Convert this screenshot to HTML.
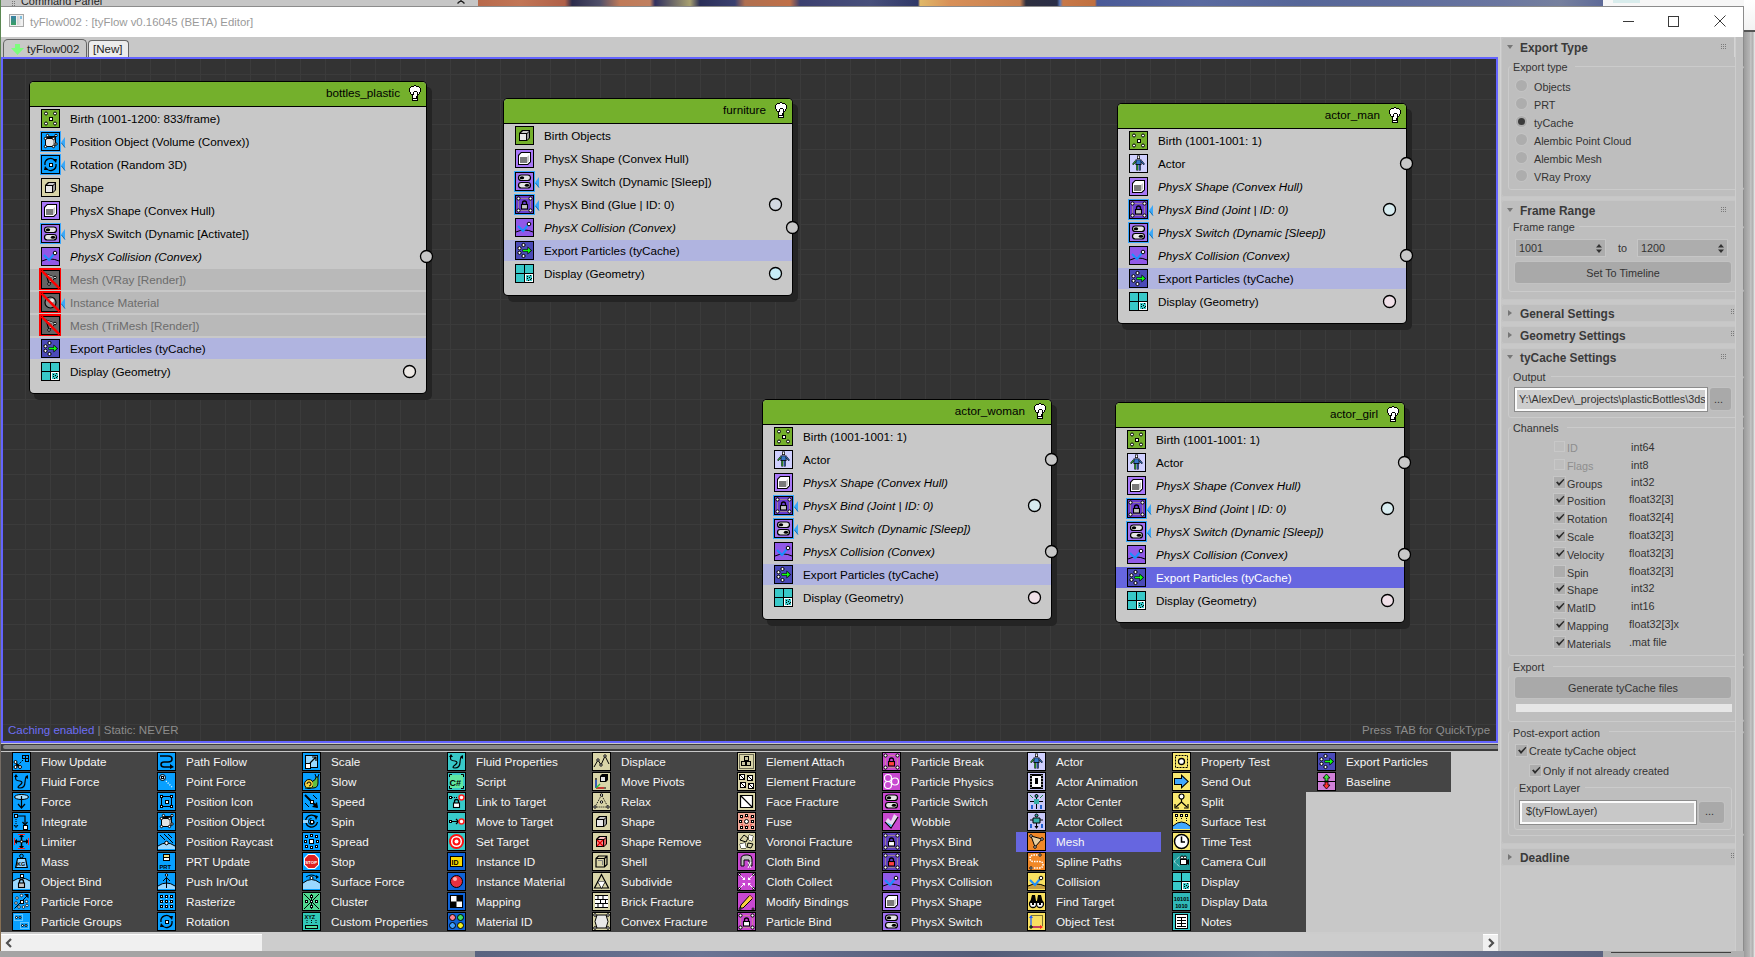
<!DOCTYPE html><html><head><meta charset="utf-8"><style>
*{box-sizing:border-box}
body{margin:0;width:1755px;height:957px;position:relative;overflow:hidden;background:#a8a8a8;font-family:"Liberation Sans", sans-serif;font-size:12px}
.a{position:absolute}
.tx{position:absolute;white-space:nowrap;line-height:20px}
svg text{font-family:"Liberation Sans", sans-serif}

</style></head><body>
<div class="a" style="left:0px;top:0px;width:478px;height:7px;background:#c6c6c6;"></div>
<div class="a" style="left:0px;top:6px;width:478px;height:1px;background:#8e8e8e;"></div>
<svg class="a" style="left:12px;top:0px;" width="3" height="6" viewBox="0 0 3 6"><path d="M0 1h1v1h-1zM2 1h1v1h-1zM0 3h1v1h-1zM2 3h1v1h-1zM0 5h1v1h-1zM2 5h1v1h-1z" fill="#777"/></svg>
<div class="tx" style="left:21px;top:-9px;font-size:10.9px;color:#222;font-weight:normal;font-style:normal;">Command Panel</div>
<svg class="a" style="left:457px;top:0px;" width="8" height="4" viewBox="0 0 8 4"><path d="M0.5 -3 L7.5 3.5 M7.5 -3 L0.5 3.5" stroke="#222" stroke-width="1.4"/></svg>
<div class="a" style="left:478px;top:0px;width:1125px;height:7px;background:linear-gradient(90deg,#b86a4c 0.09%,#c27656 3.73%,#b06048 7.73%,#2c2c4c 8.36%,#50506a 10.84%,#c07a58 12.62%,#c08060 15.29%,#303060 15.73%,#a8a070 18.84%,#2a2e58 19.73%,#3a4070 22.84%,#b07050 23.73%,#c07048 27.73%,#3c4070 28.62%,#48507c 34.84%,#303868 39.11%,#e0b868 39.29%,#d89058 41.96%,#c88050 48.18%,#2e3040 48.71%,#2a2e48 51.47%,#5a78b8 51.73%,#c87848 52.00%,#c07040 54.84%,#4a5a98 55.02%,#5a6aa0 64.18%,#566698 73.07%,#5e6c9c 81.96%,#6a76a0 90.84%,#76809e 96.18%,#5e6a98 100.00%);"></div>
<div class="a" style="left:1603px;top:0px;width:152px;height:7px;background:#f6f6f6;"></div>
<div class="a" style="left:1613px;top:0px;width:27px;height:3px;background:#d8ecec;"></div>
<div class="a" style="left:0px;top:0px;width:1px;height:957px;background:linear-gradient(#5a8a50,#707070 30%,#606878 60%,#8a7050);"></div>
<div class="a" style="left:0px;top:951px;width:475px;height:6px;background:#a4a4a4;"></div>
<div class="a" style="left:475px;top:951px;width:1128px;height:6px;background:linear-gradient(90deg,#5a6480,#6a7494 20%,#545c78 45%,#7a849c 70%,#5c6480 100%);"></div>
<div class="a" style="left:1603px;top:951px;width:152px;height:6px;background:#b0b0b0;"></div>
<div class="a" style="left:1611px;top:952px;width:120px;height:1px;background:#404040;"></div>
<div class="a" style="left:1px;top:6px;width:1743px;height:945px;background:#c8c8c8;"></div>
<div class="a" style="left:1px;top:6px;width:1743px;height:1px;background:#8c8c8c;"></div>
<div class="a" style="left:1743px;top:6px;width:1px;height:945px;background:#8c8c8c;"></div>
<div class="a" style="left:1px;top:7px;width:1742px;height:30px;background:#ffffff;"></div>
<div class="a" style="left:9px;top:14px;width:15px;height:13px;background:#f0f0f0;border:1px solid #a8a8a8"></div>
<div class="a" style="left:11px;top:16px;width:5px;height:9px;background:linear-gradient(#3a80a8,#38a060);"></div>
<div class="a" style="left:17px;top:16px;width:5px;height:9px;background:linear-gradient(90deg,#d0d0d0,#f4f4f4);"></div>
<div class="a" style="left:20px;top:16px;width:2px;height:3px;background:#80c0e0;"></div>
<div class="tx" style="left:30px;top:12px;font-size:11.4px;color:#9a9a9a;font-weight:normal;font-style:normal;">tyFlow002 : [tyFlow v0.16045 (BETA) Editor]</div>
<div class="a" style="left:1623px;top:21px;width:11px;height:1px;background:#3a3a3a;"></div>
<div class="a" style="left:1668px;top:16px;width:11px;height:11px;background:transparent;border:1px solid #3a3a3a"></div>
<svg class="a" style="left:1714px;top:15px;" width="12" height="12" viewBox="0 0 12 12"><path d="M0.5 0.5 L11.5 11.5 M11.5 0.5 L0.5 11.5" stroke="#3a3a3a" stroke-width="1"/></svg>
<div class="a" style="left:1px;top:37px;width:1742px;height:20px;background:#c8c8c8;"></div>
<div class="a" style="left:3px;top:39px;width:84px;height:19px;background:#c8c8c8;border:1px solid #646464;border-bottom:none;border-radius:5px 5px 0 0"></div>
<svg class="a" style="left:11px;top:44px;" width="13" height="11" viewBox="0 0 13 11"><path d="M4 0 H9 V4 H13 L6.5 11 L0 4 H4 Z" fill="#7cfc7c"/></svg>
<div class="tx" style="left:27px;top:39px;font-size:11.5px;color:#1e1e1e;font-weight:normal;font-style:normal;">tyFlow002</div>
<div class="a" style="left:88px;top:40px;width:41px;height:18px;background:#ececec;border:1px solid #646464;border-bottom:none;border-radius:4px 4px 0 0"></div>
<div class="tx" style="left:93px;top:39px;font-size:11.5px;color:#1e1e1e;font-weight:normal;font-style:normal;">[New]</div>
<div class="a" style="left:1px;top:57px;width:1497px;height:686px;background:#333333;background-image:linear-gradient(90deg,#3b3b3b 1px,transparent 1px),linear-gradient(#3b3b3b 1px,transparent 1px);background-size:25px 25px;background-position:24px 17px"></div>
<div class="a" style="left:1px;top:57px;width:1497px;height:686px;background:transparent;border:2px solid #6464ff"></div>
<div class="tx" style="left:8px;top:720px;font-size:11.5px"><span style="color:#6e6ef4">Caching enabled</span><span style="color:#8c8c8c"> | Static: NEVER</span></div>
<div class="tx" style="left:1362px;top:720px;font-size:11.5px;color:#8c8c8c;font-weight:normal;font-style:normal;">Press TAB for QuickType</div>
<div class="a" style="left:34px;top:87px;width:398px;height:313px;background:#242424;border-radius:5px"></div>
<div class="a" style="left:29px;top:81px;width:398px;height:313px;background:#000;border-radius:5px"></div>
<div class="a" style="left:30px;top:82px;width:396px;height:311px;background:#c8c8c8;border-radius:4px;overflow:hidden"><div class="a" style="left:0;top:0;width:396px;height:24px;background:#74b02c"></div><div class="a" style="left:0;top:24px;width:396px;height:1px;background:#000"></div></div>
<div class="tx" style="left:29px;top:83px;width:371px;text-align:right;font-size:11.7px;color:#000">bottles_plastic</div>
<svg class="a" style="left:409px;top:85px;shape-rendering:crispEdges" width="12" height="16" viewBox="0 0 12 16"><path d="M5 0h1v1h-1zM6 0h1v1h-1zM2 1h1v1h-1zM3 1h1v1h-1zM4 1h1v1h-1zM7 1h1v1h-1zM8 1h1v1h-1zM9 1h1v1h-1zM1 2h1v1h-1zM10 2h1v1h-1zM0 3h1v1h-1zM11 3h1v1h-1zM0 4h1v1h-1zM11 4h1v1h-1zM0 5h1v1h-1zM11 5h1v1h-1zM0 6h1v1h-1zM5 6h1v1h-1zM6 6h1v1h-1zM7 6h1v1h-1zM11 6h1v1h-1zM1 7h1v1h-1zM4 7h1v1h-1zM8 7h1v1h-1zM10 7h1v1h-1zM1 8h1v1h-1zM4 8h1v1h-1zM8 8h1v1h-1zM10 8h1v1h-1zM2 9h1v1h-1zM3 9h1v1h-1zM4 9h1v1h-1zM8 9h1v1h-1zM9 9h1v1h-1zM3 10h1v1h-1zM8 10h1v1h-1zM3 11h1v1h-1zM7 11h1v1h-1zM8 11h1v1h-1zM3 12h1v1h-1zM7 12h1v1h-1zM8 12h1v1h-1zM3 13h1v1h-1zM4 13h1v1h-1zM5 13h1v1h-1zM6 13h1v1h-1zM7 13h1v1h-1zM8 13h1v1h-1zM3 14h1v1h-1zM8 14h1v1h-1zM3 15h1v1h-1zM4 15h1v1h-1zM5 15h1v1h-1zM6 15h1v1h-1zM7 15h1v1h-1zM8 15h1v1h-1z" fill="#000"/><path d="M5 1h1v1h-1zM6 1h1v1h-1zM2 2h1v1h-1zM3 2h1v1h-1zM4 2h1v1h-1zM5 2h1v1h-1zM6 2h1v1h-1zM7 2h1v1h-1zM8 2h1v1h-1zM9 2h1v1h-1zM1 3h1v1h-1zM2 3h1v1h-1zM3 3h1v1h-1zM4 3h1v1h-1zM5 3h1v1h-1zM6 3h1v1h-1zM7 3h1v1h-1zM8 3h1v1h-1zM9 3h1v1h-1zM10 3h1v1h-1zM1 4h1v1h-1zM2 4h1v1h-1zM3 4h1v1h-1zM4 4h1v1h-1zM5 4h1v1h-1zM6 4h1v1h-1zM7 4h1v1h-1zM8 4h1v1h-1zM9 4h1v1h-1zM10 4h1v1h-1zM1 5h1v1h-1zM2 5h1v1h-1zM3 5h1v1h-1zM4 5h1v1h-1zM5 5h1v1h-1zM6 5h1v1h-1zM7 5h1v1h-1zM8 5h1v1h-1zM9 5h1v1h-1zM10 5h1v1h-1zM1 6h1v1h-1zM2 6h1v1h-1zM3 6h1v1h-1zM4 6h1v1h-1zM8 6h1v1h-1zM9 6h1v1h-1zM10 6h1v1h-1zM2 7h1v1h-1zM3 7h1v1h-1zM5 7h1v1h-1zM6 7h1v1h-1zM7 7h1v1h-1zM9 7h1v1h-1zM2 8h1v1h-1zM3 8h1v1h-1zM5 8h1v1h-1zM6 8h1v1h-1zM7 8h1v1h-1zM9 8h1v1h-1zM5 9h1v1h-1zM6 9h1v1h-1zM7 9h1v1h-1zM4 10h1v1h-1zM5 10h1v1h-1zM6 10h1v1h-1zM7 10h1v1h-1zM4 11h1v1h-1zM5 11h1v1h-1zM6 11h1v1h-1zM4 12h1v1h-1zM5 12h1v1h-1zM6 12h1v1h-1zM4 14h1v1h-1zM5 14h1v1h-1zM6 14h1v1h-1zM7 14h1v1h-1z" fill="#fff"/></svg>
<svg class="a" style="left:41px;top:109px;" width="19" height="19" viewBox="0 0 19 19"><rect x="0" y="0" width="19" height="19" fill="#000"/><rect x="1" y="1" width="17" height="17" fill="#74b02c"/><circle cx="5" cy="4.5" r="1.5" fill="#fff" stroke="#000" stroke-width="1"/><circle cx="14" cy="4.5" r="1.5" fill="#fff" stroke="#000" stroke-width="1"/><rect x="8.5" y="8.5" width="3" height="3" fill="#fff" stroke="#000" stroke-width="1"/><circle cx="5" cy="14.5" r="1.5" fill="#fff" stroke="#000" stroke-width="1"/><circle cx="14" cy="14.5" r="1.5" fill="#fff" stroke="#000" stroke-width="1"/></svg>
<div class="tx" style="left:70px;top:109px;font-size:11.7px;color:#000000;font-weight:normal;font-style:normal;">Birth (1001-1200: 833/frame)</div>
<div class="a" style="left:40px;top:131px;width:21px;height:21px;background:#3aa8ff;"></div>
<svg class="a" style="left:41px;top:132px;" width="19" height="19" viewBox="0 0 19 19"><rect x="0" y="0" width="19" height="19" fill="#000"/><rect x="1" y="1" width="17" height="17" fill="#08a0ff"/><path d="M4 6 L6 4 H15 V13 L13 15 H4 Z" fill="#000" /><path d="M5 7 H12 V14 H5 Z" fill="#e4e4e4" /><path d="M12 7 L14 5 V13 L12 14 Z" fill="#a0a0a0" /><circle cx="4.5" cy="6.5" r="1.2" fill="#fff" stroke="#000" stroke-width="1"/><circle cx="12.5" cy="6.5" r="1.2" fill="#fff" stroke="#000" stroke-width="1"/><circle cx="4.5" cy="14.5" r="1.2" fill="#fff" stroke="#000" stroke-width="1"/><circle cx="12.5" cy="14.5" r="1.2" fill="#fff" stroke="#000" stroke-width="1"/><circle cx="6.5" cy="3.5" r="1.2" fill="#fff" stroke="#000" stroke-width="1"/><circle cx="15" cy="3.5" r="1.2" fill="#fff" stroke="#000" stroke-width="1"/><circle cx="15" cy="12" r="1.2" fill="#fff" stroke="#000" stroke-width="1"/></svg>
<svg class="a" style="left:61px;top:137px;" width="5" height="12" viewBox="0 0 5 12"><path d="M0 5.5 L4 0 L4 11 Z" fill="#3aa8f8"/><path d="M0.5 6 L4 10.5" stroke="#1a70b0" stroke-width="1"/></svg>
<div class="tx" style="left:70px;top:132px;font-size:11.7px;color:#000000;font-weight:normal;font-style:normal;">Position Object (Volume (Convex))</div>
<div class="a" style="left:40px;top:154px;width:21px;height:21px;background:#3aa8ff;"></div>
<svg class="a" style="left:41px;top:155px;" width="19" height="19" viewBox="0 0 19 19"><rect x="0" y="0" width="19" height="19" fill="#000"/><rect x="1" y="1" width="17" height="17" fill="#08a0ff"/><path d="M4 10 A5.5 5.5 0 0 1 14 6" fill="none" stroke="#000" stroke-width="1.3" /><path d="M12 4 L16 4 L15 8 Z" fill="#000" /><path d="M15 9 A5.5 5.5 0 0 1 5 13" fill="none" stroke="#000" stroke-width="1.3" /><path d="M7 15 L3 15 L4 11 Z" fill="#000" /><rect x="8.5" y="8.5" width="3" height="3" fill="#fff" stroke="#000" stroke-width="1"/></svg>
<svg class="a" style="left:61px;top:160px;" width="5" height="12" viewBox="0 0 5 12"><path d="M0 5.5 L4 0 L4 11 Z" fill="#3aa8f8"/><path d="M0.5 6 L4 10.5" stroke="#1a70b0" stroke-width="1"/></svg>
<div class="tx" style="left:70px;top:155px;font-size:11.7px;color:#000000;font-weight:normal;font-style:normal;">Rotation (Random 3D)</div>
<svg class="a" style="left:41px;top:178px;" width="19" height="19" viewBox="0 0 19 19"><rect x="0" y="0" width="19" height="19" fill="#000"/><rect x="1" y="1" width="17" height="17" fill="#d8d4a8"/><path d="M4 7 L7 4 L15 4 L15 12 L12 15 L4 15 Z" fill="#000" /><path d="M5 8 H11 V14 H5 Z" fill="#e8e8e8" /><path d="M6 7 L8 5 H14 L12 7 Z" fill="#c8c8c8" /><path d="M12 8 L14 6 V12 L12 14 Z" fill="#9a9a9a" /></svg>
<div class="tx" style="left:70px;top:178px;font-size:11.7px;color:#000000;font-weight:normal;font-style:normal;">Shape</div>
<svg class="a" style="left:41px;top:201px;" width="19" height="19" viewBox="0 0 19 19"><rect x="0" y="0" width="19" height="19" fill="#000"/><rect x="1" y="1" width="17" height="17" fill="#a878f8"/><path d="M3 6 L6 3 H16 V13 L13 16 H3 Z" fill="#000" /><path d="M4 6.5 L6.5 4 H15 V12.5 L12.5 15 H4 Z" fill="#fff" /><path d="M5 8 H12 V14 H5 Z" fill="#7a7a7a" /><path d="M12 8 L14 6 V12 L12 14 Z" fill="#c8c8c8" /></svg>
<div class="tx" style="left:70px;top:201px;font-size:11.7px;color:#000000;font-weight:normal;font-style:normal;">PhysX Shape (Convex Hull)</div>
<div class="a" style="left:40px;top:223px;width:21px;height:21px;background:#3aa8ff;"></div>
<svg class="a" style="left:41px;top:224px;" width="19" height="19" viewBox="0 0 19 19"><rect x="0" y="0" width="19" height="19" fill="#000"/><rect x="1" y="1" width="17" height="17" fill="#a070f0"/><rect x="3.5" y="3" width="12" height="5.5" rx="2.75" fill="#e4e4e4" stroke="#000" stroke-width="1.2"/><rect x="3.5" y="10.5" width="12" height="5.5" rx="2.75" fill="#e4e4e4" stroke="#000" stroke-width="1.2"/><ellipse cx="7" cy="5.75" rx="2.2" ry="1.6" fill="#000"/><ellipse cx="12" cy="13.25" rx="2.2" ry="1.6" fill="#000"/></svg>
<svg class="a" style="left:61px;top:229px;" width="5" height="12" viewBox="0 0 5 12"><path d="M0 5.5 L4 0 L4 11 Z" fill="#3aa8f8"/><path d="M0.5 6 L4 10.5" stroke="#1a70b0" stroke-width="1"/></svg>
<div class="tx" style="left:70px;top:224px;font-size:11.7px;color:#000000;font-weight:normal;font-style:normal;">PhysX Switch (Dynamic [Activate])</div>
<svg class="a" style="left:41px;top:247px;" width="19" height="19" viewBox="0 0 19 19"><rect x="0" y="0" width="19" height="19" fill="#000"/><rect x="1" y="1" width="17" height="17" fill="#9058e8"/><path d="M1 17 V14 Q9.5 10 18 14 V17 Z" fill="#9058e8" /><path d="M1 14 Q9.5 10 18 14" fill="none" stroke="#000" stroke-width="1" /><path d="M3 8 L8 13 L13 7" fill="none" stroke="#1a90ff" stroke-width="2" /><circle cx="14" cy="6" r="1.8" fill="#fff" stroke="#000" stroke-width="1"/></svg>
<div class="tx" style="left:70px;top:247px;font-size:11.7px;color:#000000;font-weight:normal;font-style:italic;">PhysX Collision (Convex)</div>
<svg class="a" style="left:419px;top:249px;" width="15" height="15" viewBox="0 0 15 15"><circle cx="7.5" cy="7.5" r="6" fill="#c8c8c8" stroke="#000" stroke-width="1.3"/></svg>
<div class="a" style="left:30px;top:269px;width:396px;height:21px;background:#b9b9b9;"></div>
<div class="a" style="left:39px;top:268px;width:22px;height:22px;background:#ff0000;"></div>
<svg class="a" style="left:41px;top:270px;" width="19" height="19" viewBox="0 0 19 19"><rect x="0" y="0" width="19" height="19" fill="#000"/><rect x="1" y="1" width="17" height="17" fill="#646464"/><path d="M5 4 L14 7.5 L8 14 Z" fill="none" stroke="#000" stroke-width="1.1" /><path d="M6 5 L13 7.5 L8.5 12.5" fill="none" stroke="#fff" stroke-width="0.7" /><circle cx="14" cy="7.5" r="1.3" fill="#fff" stroke="#000" stroke-width="1"/><circle cx="8" cy="14" r="1.3" fill="#fff" stroke="#000" stroke-width="1"/><path d="M0.5 0.5 L18.5 18.5" stroke="#ff0000" stroke-width="2.4"/></svg>
<div class="tx" style="left:70px;top:270px;font-size:11.7px;color:#6c6c6c;font-weight:normal;font-style:normal;">Mesh (VRay [Render])</div>
<div class="a" style="left:30px;top:292px;width:396px;height:21px;background:#b9b9b9;"></div>
<div class="a" style="left:39px;top:291px;width:22px;height:22px;background:#ff0000;"></div>
<svg class="a" style="left:41px;top:293px;" width="19" height="19" viewBox="0 0 19 19"><rect x="0" y="0" width="19" height="19" fill="#000"/><rect x="1" y="1" width="17" height="17" fill="#646464"/><circle cx="9.5" cy="9.5" r="5.5" fill="#8c8c8c" stroke="#000" stroke-width="1.2"/><circle cx="11" cy="7.5" r="2" fill="#e8e8e8"/><path d="M0.5 0.5 L18.5 18.5" stroke="#ff0000" stroke-width="2.4"/></svg>
<svg class="a" style="left:61px;top:298px;" width="5" height="12" viewBox="0 0 5 12"><path d="M0 5.5 L4 0 L4 11 Z" fill="#3aa8f8"/><path d="M0.5 6 L4 10.5" stroke="#1a70b0" stroke-width="1"/></svg>
<div class="tx" style="left:70px;top:293px;font-size:11.7px;color:#6c6c6c;font-weight:normal;font-style:normal;">Instance Material</div>
<div class="a" style="left:30px;top:315px;width:396px;height:21px;background:#b9b9b9;"></div>
<div class="a" style="left:39px;top:314px;width:22px;height:22px;background:#ff0000;"></div>
<svg class="a" style="left:41px;top:316px;" width="19" height="19" viewBox="0 0 19 19"><rect x="0" y="0" width="19" height="19" fill="#000"/><rect x="1" y="1" width="17" height="17" fill="#646464"/><path d="M5 4 L14 7.5 L8 14 Z" fill="none" stroke="#000" stroke-width="1.1" /><path d="M6 5 L13 7.5 L8.5 12.5" fill="none" stroke="#fff" stroke-width="0.7" /><circle cx="14" cy="7.5" r="1.3" fill="#fff" stroke="#000" stroke-width="1"/><circle cx="8" cy="14" r="1.3" fill="#fff" stroke="#000" stroke-width="1"/><path d="M0.5 0.5 L18.5 18.5" stroke="#ff0000" stroke-width="2.4"/></svg>
<div class="tx" style="left:70px;top:316px;font-size:11.7px;color:#6c6c6c;font-weight:normal;font-style:normal;">Mesh (TriMesh [Render])</div>
<div class="a" style="left:30px;top:338px;width:396px;height:21px;background:#b0b4e0;"></div>
<svg class="a" style="left:41px;top:339px;" width="19" height="19" viewBox="0 0 19 19"><rect x="0" y="0" width="19" height="19" fill="#000"/><rect x="1" y="1" width="17" height="17" fill="#4a4ab8"/><circle cx="8.5" cy="4" r="1.6" fill="#fff" stroke="#000" stroke-width="1"/><circle cx="4.5" cy="7.2" r="1.6" fill="#fff" stroke="#000" stroke-width="1"/><circle cx="4.5" cy="11.8" r="1.6" fill="#fff" stroke="#000" stroke-width="1"/><circle cx="8.5" cy="15" r="1.6" fill="#fff" stroke="#000" stroke-width="1"/><path d="M7.5 8.3 H12.5 V5.5 L17 9.5 L12.5 13.5 V10.7 H7.5 Z" fill="#000" /><path d="M8 8.8 H13 V6.8 L16 9.5 L13 12.2 V10.2 H8 Z" fill="#10ff10" /></svg>
<div class="tx" style="left:70px;top:339px;font-size:11.7px;color:#000000;font-weight:normal;font-style:normal;">Export Particles (tyCache)</div>
<svg class="a" style="left:41px;top:362px;" width="19" height="19" viewBox="0 0 19 19"><rect x="0" y="0" width="19" height="19" fill="#000"/><rect x="1" y="1" width="8" height="8" fill="#38c8c8"/><rect x="10" y="1" width="8" height="8" fill="#38c8c8"/><rect x="1" y="10" width="8" height="8" fill="#38c8c8"/><rect x="10" y="10" width="8" height="8" fill="#ffffff"/><rect x="11" y="11" width="6" height="6" fill="#38c8c8"/><path d="M12 12h1v1h-1zM15 11h1v1h-1zM14 13h1v1h-1zM16 14h1v1h-1zM12 14h1v1h-1zM13 16h1v1h-1zM15 15h1v1h-1z" fill="#000" /></svg>
<div class="tx" style="left:70px;top:362px;font-size:11.7px;color:#000000;font-weight:normal;font-style:normal;">Display (Geometry)</div>
<svg class="a" style="left:402px;top:364px;" width="15" height="15" viewBox="0 0 15 15"><circle cx="7.5" cy="7.5" r="6" fill="#ece8e4" stroke="#000" stroke-width="1.3"/></svg>
<div class="a" style="left:508px;top:104px;width:290px;height:198px;background:#242424;border-radius:5px"></div>
<div class="a" style="left:503px;top:98px;width:290px;height:198px;background:#000;border-radius:5px"></div>
<div class="a" style="left:504px;top:99px;width:288px;height:196px;background:#c8c8c8;border-radius:4px;overflow:hidden"><div class="a" style="left:0;top:0;width:288px;height:24px;background:#74b02c"></div><div class="a" style="left:0;top:24px;width:288px;height:1px;background:#000"></div></div>
<div class="tx" style="left:503px;top:100px;width:263px;text-align:right;font-size:11.7px;color:#000">furniture</div>
<svg class="a" style="left:775px;top:102px;shape-rendering:crispEdges" width="12" height="16" viewBox="0 0 12 16"><path d="M5 0h1v1h-1zM6 0h1v1h-1zM2 1h1v1h-1zM3 1h1v1h-1zM4 1h1v1h-1zM7 1h1v1h-1zM8 1h1v1h-1zM9 1h1v1h-1zM1 2h1v1h-1zM10 2h1v1h-1zM0 3h1v1h-1zM11 3h1v1h-1zM0 4h1v1h-1zM11 4h1v1h-1zM0 5h1v1h-1zM11 5h1v1h-1zM0 6h1v1h-1zM5 6h1v1h-1zM6 6h1v1h-1zM7 6h1v1h-1zM11 6h1v1h-1zM1 7h1v1h-1zM4 7h1v1h-1zM8 7h1v1h-1zM10 7h1v1h-1zM1 8h1v1h-1zM4 8h1v1h-1zM8 8h1v1h-1zM10 8h1v1h-1zM2 9h1v1h-1zM3 9h1v1h-1zM4 9h1v1h-1zM8 9h1v1h-1zM9 9h1v1h-1zM3 10h1v1h-1zM8 10h1v1h-1zM3 11h1v1h-1zM7 11h1v1h-1zM8 11h1v1h-1zM3 12h1v1h-1zM7 12h1v1h-1zM8 12h1v1h-1zM3 13h1v1h-1zM4 13h1v1h-1zM5 13h1v1h-1zM6 13h1v1h-1zM7 13h1v1h-1zM8 13h1v1h-1zM3 14h1v1h-1zM8 14h1v1h-1zM3 15h1v1h-1zM4 15h1v1h-1zM5 15h1v1h-1zM6 15h1v1h-1zM7 15h1v1h-1zM8 15h1v1h-1z" fill="#000"/><path d="M5 1h1v1h-1zM6 1h1v1h-1zM2 2h1v1h-1zM3 2h1v1h-1zM4 2h1v1h-1zM5 2h1v1h-1zM6 2h1v1h-1zM7 2h1v1h-1zM8 2h1v1h-1zM9 2h1v1h-1zM1 3h1v1h-1zM2 3h1v1h-1zM3 3h1v1h-1zM4 3h1v1h-1zM5 3h1v1h-1zM6 3h1v1h-1zM7 3h1v1h-1zM8 3h1v1h-1zM9 3h1v1h-1zM10 3h1v1h-1zM1 4h1v1h-1zM2 4h1v1h-1zM3 4h1v1h-1zM4 4h1v1h-1zM5 4h1v1h-1zM6 4h1v1h-1zM7 4h1v1h-1zM8 4h1v1h-1zM9 4h1v1h-1zM10 4h1v1h-1zM1 5h1v1h-1zM2 5h1v1h-1zM3 5h1v1h-1zM4 5h1v1h-1zM5 5h1v1h-1zM6 5h1v1h-1zM7 5h1v1h-1zM8 5h1v1h-1zM9 5h1v1h-1zM10 5h1v1h-1zM1 6h1v1h-1zM2 6h1v1h-1zM3 6h1v1h-1zM4 6h1v1h-1zM8 6h1v1h-1zM9 6h1v1h-1zM10 6h1v1h-1zM2 7h1v1h-1zM3 7h1v1h-1zM5 7h1v1h-1zM6 7h1v1h-1zM7 7h1v1h-1zM9 7h1v1h-1zM2 8h1v1h-1zM3 8h1v1h-1zM5 8h1v1h-1zM6 8h1v1h-1zM7 8h1v1h-1zM9 8h1v1h-1zM5 9h1v1h-1zM6 9h1v1h-1zM7 9h1v1h-1zM4 10h1v1h-1zM5 10h1v1h-1zM6 10h1v1h-1zM7 10h1v1h-1zM4 11h1v1h-1zM5 11h1v1h-1zM6 11h1v1h-1zM4 12h1v1h-1zM5 12h1v1h-1zM6 12h1v1h-1zM4 14h1v1h-1zM5 14h1v1h-1zM6 14h1v1h-1zM7 14h1v1h-1z" fill="#fff"/></svg>
<svg class="a" style="left:515px;top:126px;" width="19" height="19" viewBox="0 0 19 19"><rect x="0" y="0" width="19" height="19" fill="#000"/><rect x="1" y="1" width="17" height="17" fill="#74b02c"/><path d="M4 7 L7 4 L15 4 L15 12 L12 15 L4 15 Z" fill="#000" /><path d="M5 8 H11 V14 H5 Z" fill="#e8e8e8" /><path d="M6 7 L8 5 H14 L12 7 Z" fill="#c8c8c8" /><path d="M12 8 L14 6 V12 L12 14 Z" fill="#9a9a9a" /></svg>
<div class="tx" style="left:544px;top:126px;font-size:11.7px;color:#000000;font-weight:normal;font-style:normal;">Birth Objects</div>
<svg class="a" style="left:515px;top:149px;" width="19" height="19" viewBox="0 0 19 19"><rect x="0" y="0" width="19" height="19" fill="#000"/><rect x="1" y="1" width="17" height="17" fill="#a878f8"/><path d="M3 6 L6 3 H16 V13 L13 16 H3 Z" fill="#000" /><path d="M4 6.5 L6.5 4 H15 V12.5 L12.5 15 H4 Z" fill="#fff" /><path d="M5 8 H12 V14 H5 Z" fill="#7a7a7a" /><path d="M12 8 L14 6 V12 L12 14 Z" fill="#c8c8c8" /></svg>
<div class="tx" style="left:544px;top:149px;font-size:11.7px;color:#000000;font-weight:normal;font-style:normal;">PhysX Shape (Convex Hull)</div>
<div class="a" style="left:514px;top:171px;width:21px;height:21px;background:#3aa8ff;"></div>
<svg class="a" style="left:515px;top:172px;" width="19" height="19" viewBox="0 0 19 19"><rect x="0" y="0" width="19" height="19" fill="#000"/><rect x="1" y="1" width="17" height="17" fill="#a070f0"/><rect x="3.5" y="3" width="12" height="5.5" rx="2.75" fill="#e4e4e4" stroke="#000" stroke-width="1.2"/><rect x="3.5" y="10.5" width="12" height="5.5" rx="2.75" fill="#e4e4e4" stroke="#000" stroke-width="1.2"/><ellipse cx="7" cy="5.75" rx="2.2" ry="1.6" fill="#000"/><ellipse cx="12" cy="13.25" rx="2.2" ry="1.6" fill="#000"/></svg>
<svg class="a" style="left:535px;top:177px;" width="5" height="12" viewBox="0 0 5 12"><path d="M0 5.5 L4 0 L4 11 Z" fill="#3aa8f8"/><path d="M0.5 6 L4 10.5" stroke="#1a70b0" stroke-width="1"/></svg>
<div class="tx" style="left:544px;top:172px;font-size:11.7px;color:#000000;font-weight:normal;font-style:normal;">PhysX Switch (Dynamic [Sleep])</div>
<div class="a" style="left:514px;top:194px;width:21px;height:21px;background:#3aa8ff;"></div>
<svg class="a" style="left:515px;top:195px;" width="19" height="19" viewBox="0 0 19 19"><rect x="0" y="0" width="19" height="19" fill="#000"/><rect x="1" y="1" width="17" height="17" fill="#6a3ed0"/><path d="M3.5 3.5 H15.5 V15.5 H3.5 Z" fill="none" stroke="#c8b868" stroke-width="1" stroke-dasharray="1 1"/><circle cx="3.5" cy="3.5" r="1.6" fill="#fff" stroke="#000" stroke-width="1"/><circle cx="15.5" cy="3.5" r="1.6" fill="#fff" stroke="#000" stroke-width="1"/><circle cx="3.5" cy="15.5" r="1.6" fill="#fff" stroke="#000" stroke-width="1"/><circle cx="15.5" cy="15.5" r="1.6" fill="#fff" stroke="#000" stroke-width="1"/><path d="M7.5 9.5 V8.0 A2 2 0 0 1 11.5 8.0 V9.5" fill="none" stroke="#000" stroke-width="1.3"/><rect x="6.5" y="9.5" width="6" height="4.5" fill="#c4c4c4" stroke="#000" stroke-width="1.1"/></svg>
<svg class="a" style="left:535px;top:200px;" width="5" height="12" viewBox="0 0 5 12"><path d="M0 5.5 L4 0 L4 11 Z" fill="#3aa8f8"/><path d="M0.5 6 L4 10.5" stroke="#1a70b0" stroke-width="1"/></svg>
<div class="tx" style="left:544px;top:195px;font-size:11.7px;color:#000000;font-weight:normal;font-style:normal;">PhysX Bind (Glue | ID: 0)</div>
<svg class="a" style="left:768px;top:197px;" width="15" height="15" viewBox="0 0 15 15"><circle cx="7.5" cy="7.5" r="6" fill="#d2d8e2" stroke="#000" stroke-width="1.3"/></svg>
<svg class="a" style="left:515px;top:218px;" width="19" height="19" viewBox="0 0 19 19"><rect x="0" y="0" width="19" height="19" fill="#000"/><rect x="1" y="1" width="17" height="17" fill="#9058e8"/><path d="M1 17 V14 Q9.5 10 18 14 V17 Z" fill="#9058e8" /><path d="M1 14 Q9.5 10 18 14" fill="none" stroke="#000" stroke-width="1" /><path d="M3 8 L8 13 L13 7" fill="none" stroke="#1a90ff" stroke-width="2" /><circle cx="14" cy="6" r="1.8" fill="#fff" stroke="#000" stroke-width="1"/></svg>
<div class="tx" style="left:544px;top:218px;font-size:11.7px;color:#000000;font-weight:normal;font-style:italic;">PhysX Collision (Convex)</div>
<svg class="a" style="left:785px;top:220px;" width="15" height="15" viewBox="0 0 15 15"><circle cx="7.5" cy="7.5" r="6" fill="#c8c8c8" stroke="#000" stroke-width="1.3"/></svg>
<div class="a" style="left:504px;top:240px;width:288px;height:21px;background:#b0b4e0;"></div>
<svg class="a" style="left:515px;top:241px;" width="19" height="19" viewBox="0 0 19 19"><rect x="0" y="0" width="19" height="19" fill="#000"/><rect x="1" y="1" width="17" height="17" fill="#4a4ab8"/><circle cx="8.5" cy="4" r="1.6" fill="#fff" stroke="#000" stroke-width="1"/><circle cx="4.5" cy="7.2" r="1.6" fill="#fff" stroke="#000" stroke-width="1"/><circle cx="4.5" cy="11.8" r="1.6" fill="#fff" stroke="#000" stroke-width="1"/><circle cx="8.5" cy="15" r="1.6" fill="#fff" stroke="#000" stroke-width="1"/><path d="M7.5 8.3 H12.5 V5.5 L17 9.5 L12.5 13.5 V10.7 H7.5 Z" fill="#000" /><path d="M8 8.8 H13 V6.8 L16 9.5 L13 12.2 V10.2 H8 Z" fill="#10ff10" /></svg>
<div class="tx" style="left:544px;top:241px;font-size:11.7px;color:#000000;font-weight:normal;font-style:normal;">Export Particles (tyCache)</div>
<svg class="a" style="left:515px;top:264px;" width="19" height="19" viewBox="0 0 19 19"><rect x="0" y="0" width="19" height="19" fill="#000"/><rect x="1" y="1" width="8" height="8" fill="#38c8c8"/><rect x="10" y="1" width="8" height="8" fill="#38c8c8"/><rect x="1" y="10" width="8" height="8" fill="#38c8c8"/><rect x="10" y="10" width="8" height="8" fill="#ffffff"/><rect x="11" y="11" width="6" height="6" fill="#38c8c8"/><path d="M12 12h1v1h-1zM15 11h1v1h-1zM14 13h1v1h-1zM16 14h1v1h-1zM12 14h1v1h-1zM13 16h1v1h-1zM15 15h1v1h-1z" fill="#000" /></svg>
<div class="tx" style="left:544px;top:264px;font-size:11.7px;color:#000000;font-weight:normal;font-style:normal;">Display (Geometry)</div>
<svg class="a" style="left:768px;top:266px;" width="15" height="15" viewBox="0 0 15 15"><circle cx="7.5" cy="7.5" r="6" fill="#c8eef8" stroke="#000" stroke-width="1.3"/></svg>
<div class="a" style="left:1122px;top:109px;width:290px;height:221px;background:#242424;border-radius:5px"></div>
<div class="a" style="left:1117px;top:103px;width:290px;height:221px;background:#000;border-radius:5px"></div>
<div class="a" style="left:1118px;top:104px;width:288px;height:219px;background:#c8c8c8;border-radius:4px;overflow:hidden"><div class="a" style="left:0;top:0;width:288px;height:24px;background:#74b02c"></div><div class="a" style="left:0;top:24px;width:288px;height:1px;background:#000"></div></div>
<div class="tx" style="left:1117px;top:105px;width:263px;text-align:right;font-size:11.7px;color:#000">actor_man</div>
<svg class="a" style="left:1389px;top:107px;shape-rendering:crispEdges" width="12" height="16" viewBox="0 0 12 16"><path d="M5 0h1v1h-1zM6 0h1v1h-1zM2 1h1v1h-1zM3 1h1v1h-1zM4 1h1v1h-1zM7 1h1v1h-1zM8 1h1v1h-1zM9 1h1v1h-1zM1 2h1v1h-1zM10 2h1v1h-1zM0 3h1v1h-1zM11 3h1v1h-1zM0 4h1v1h-1zM11 4h1v1h-1zM0 5h1v1h-1zM11 5h1v1h-1zM0 6h1v1h-1zM5 6h1v1h-1zM6 6h1v1h-1zM7 6h1v1h-1zM11 6h1v1h-1zM1 7h1v1h-1zM4 7h1v1h-1zM8 7h1v1h-1zM10 7h1v1h-1zM1 8h1v1h-1zM4 8h1v1h-1zM8 8h1v1h-1zM10 8h1v1h-1zM2 9h1v1h-1zM3 9h1v1h-1zM4 9h1v1h-1zM8 9h1v1h-1zM9 9h1v1h-1zM3 10h1v1h-1zM8 10h1v1h-1zM3 11h1v1h-1zM7 11h1v1h-1zM8 11h1v1h-1zM3 12h1v1h-1zM7 12h1v1h-1zM8 12h1v1h-1zM3 13h1v1h-1zM4 13h1v1h-1zM5 13h1v1h-1zM6 13h1v1h-1zM7 13h1v1h-1zM8 13h1v1h-1zM3 14h1v1h-1zM8 14h1v1h-1zM3 15h1v1h-1zM4 15h1v1h-1zM5 15h1v1h-1zM6 15h1v1h-1zM7 15h1v1h-1zM8 15h1v1h-1z" fill="#000"/><path d="M5 1h1v1h-1zM6 1h1v1h-1zM2 2h1v1h-1zM3 2h1v1h-1zM4 2h1v1h-1zM5 2h1v1h-1zM6 2h1v1h-1zM7 2h1v1h-1zM8 2h1v1h-1zM9 2h1v1h-1zM1 3h1v1h-1zM2 3h1v1h-1zM3 3h1v1h-1zM4 3h1v1h-1zM5 3h1v1h-1zM6 3h1v1h-1zM7 3h1v1h-1zM8 3h1v1h-1zM9 3h1v1h-1zM10 3h1v1h-1zM1 4h1v1h-1zM2 4h1v1h-1zM3 4h1v1h-1zM4 4h1v1h-1zM5 4h1v1h-1zM6 4h1v1h-1zM7 4h1v1h-1zM8 4h1v1h-1zM9 4h1v1h-1zM10 4h1v1h-1zM1 5h1v1h-1zM2 5h1v1h-1zM3 5h1v1h-1zM4 5h1v1h-1zM5 5h1v1h-1zM6 5h1v1h-1zM7 5h1v1h-1zM8 5h1v1h-1zM9 5h1v1h-1zM10 5h1v1h-1zM1 6h1v1h-1zM2 6h1v1h-1zM3 6h1v1h-1zM4 6h1v1h-1zM8 6h1v1h-1zM9 6h1v1h-1zM10 6h1v1h-1zM2 7h1v1h-1zM3 7h1v1h-1zM5 7h1v1h-1zM6 7h1v1h-1zM7 7h1v1h-1zM9 7h1v1h-1zM2 8h1v1h-1zM3 8h1v1h-1zM5 8h1v1h-1zM6 8h1v1h-1zM7 8h1v1h-1zM9 8h1v1h-1zM5 9h1v1h-1zM6 9h1v1h-1zM7 9h1v1h-1zM4 10h1v1h-1zM5 10h1v1h-1zM6 10h1v1h-1zM7 10h1v1h-1zM4 11h1v1h-1zM5 11h1v1h-1zM6 11h1v1h-1zM4 12h1v1h-1zM5 12h1v1h-1zM6 12h1v1h-1zM4 14h1v1h-1zM5 14h1v1h-1zM6 14h1v1h-1zM7 14h1v1h-1z" fill="#fff"/></svg>
<svg class="a" style="left:1129px;top:131px;" width="19" height="19" viewBox="0 0 19 19"><rect x="0" y="0" width="19" height="19" fill="#000"/><rect x="1" y="1" width="17" height="17" fill="#74b02c"/><circle cx="5" cy="4.5" r="1.5" fill="#fff" stroke="#000" stroke-width="1"/><circle cx="14" cy="4.5" r="1.5" fill="#fff" stroke="#000" stroke-width="1"/><rect x="8.5" y="8.5" width="3" height="3" fill="#fff" stroke="#000" stroke-width="1"/><circle cx="5" cy="14.5" r="1.5" fill="#fff" stroke="#000" stroke-width="1"/><circle cx="14" cy="14.5" r="1.5" fill="#fff" stroke="#000" stroke-width="1"/></svg>
<div class="tx" style="left:1158px;top:131px;font-size:11.7px;color:#000000;font-weight:normal;font-style:normal;">Birth (1001-1001: 1)</div>
<svg class="a" style="left:1129px;top:154px;" width="19" height="19" viewBox="0 0 19 19"><rect x="0" y="0" width="19" height="19" fill="#000"/><rect x="1" y="1" width="17" height="17" fill="#d0d0ff"/><path d="M8 1.5 H11 V5 H8 Z" fill="#000" /><path d="M8.7 2.2 H10.3 V4.3 H8.7 Z" fill="#fff" /><path d="M6.5 5.5 H12.5 V11 H6.5 Z" fill="#000" /><path d="M7.3 6.2 H11.7 V10.3 H7.3 Z" fill="#3878c8" /><path d="M6.8 7 L3.8 10.5" fill="none" stroke="#000" stroke-width="1.8" /><path d="M6.8 7 L3.8 10.5" fill="none" stroke="#30d030" stroke-width="0.8" /><path d="M12.2 7 L15.2 10.5" fill="none" stroke="#000" stroke-width="1.8" /><path d="M12.2 7 L15.2 10.5" fill="none" stroke="#3080e0" stroke-width="0.8" /><path d="M7.3 10.5 H9.2 V16.5 H7.3 Z" fill="#000" /><path d="M9.8 10.5 H11.7 V16.5 H9.8 Z" fill="#000" /><path d="M7.8 11 H8.7 V16 H7.8 Z" fill="#30c030" /><path d="M10.3 11 H11.2 V16 H10.3 Z" fill="#3070e0" /></svg>
<div class="tx" style="left:1158px;top:154px;font-size:11.7px;color:#000000;font-weight:normal;font-style:normal;">Actor</div>
<svg class="a" style="left:1399px;top:156px;" width="15" height="15" viewBox="0 0 15 15"><circle cx="7.5" cy="7.5" r="6" fill="#c8c8c8" stroke="#000" stroke-width="1.3"/></svg>
<svg class="a" style="left:1129px;top:177px;" width="19" height="19" viewBox="0 0 19 19"><rect x="0" y="0" width="19" height="19" fill="#000"/><rect x="1" y="1" width="17" height="17" fill="#a878f8"/><path d="M3 6 L6 3 H16 V13 L13 16 H3 Z" fill="#000" /><path d="M4 6.5 L6.5 4 H15 V12.5 L12.5 15 H4 Z" fill="#fff" /><path d="M5 8 H12 V14 H5 Z" fill="#7a7a7a" /><path d="M12 8 L14 6 V12 L12 14 Z" fill="#c8c8c8" /></svg>
<div class="tx" style="left:1158px;top:177px;font-size:11.7px;color:#000000;font-weight:normal;font-style:italic;">PhysX Shape (Convex Hull)</div>
<div class="a" style="left:1128px;top:199px;width:21px;height:21px;background:#3aa8ff;"></div>
<svg class="a" style="left:1129px;top:200px;" width="19" height="19" viewBox="0 0 19 19"><rect x="0" y="0" width="19" height="19" fill="#000"/><rect x="1" y="1" width="17" height="17" fill="#6a3ed0"/><path d="M3.5 3.5 H15.5 V15.5 H3.5 Z" fill="none" stroke="#c8b868" stroke-width="1" stroke-dasharray="1 1"/><circle cx="3.5" cy="3.5" r="1.6" fill="#fff" stroke="#000" stroke-width="1"/><circle cx="15.5" cy="3.5" r="1.6" fill="#fff" stroke="#000" stroke-width="1"/><circle cx="3.5" cy="15.5" r="1.6" fill="#fff" stroke="#000" stroke-width="1"/><circle cx="15.5" cy="15.5" r="1.6" fill="#fff" stroke="#000" stroke-width="1"/><path d="M7.5 9.5 V8.0 A2 2 0 0 1 11.5 8.0 V9.5" fill="none" stroke="#000" stroke-width="1.3"/><rect x="6.5" y="9.5" width="6" height="4.5" fill="#c4c4c4" stroke="#000" stroke-width="1.1"/></svg>
<svg class="a" style="left:1149px;top:205px;" width="5" height="12" viewBox="0 0 5 12"><path d="M0 5.5 L4 0 L4 11 Z" fill="#3aa8f8"/><path d="M0.5 6 L4 10.5" stroke="#1a70b0" stroke-width="1"/></svg>
<div class="tx" style="left:1158px;top:200px;font-size:11.7px;color:#000000;font-weight:normal;font-style:italic;">PhysX Bind (Joint | ID: 0)</div>
<svg class="a" style="left:1382px;top:202px;" width="15" height="15" viewBox="0 0 15 15"><circle cx="7.5" cy="7.5" r="6" fill="#d8ecf0" stroke="#000" stroke-width="1.3"/></svg>
<div class="a" style="left:1128px;top:222px;width:21px;height:21px;background:#3aa8ff;"></div>
<svg class="a" style="left:1129px;top:223px;" width="19" height="19" viewBox="0 0 19 19"><rect x="0" y="0" width="19" height="19" fill="#000"/><rect x="1" y="1" width="17" height="17" fill="#a070f0"/><rect x="3.5" y="3" width="12" height="5.5" rx="2.75" fill="#e4e4e4" stroke="#000" stroke-width="1.2"/><rect x="3.5" y="10.5" width="12" height="5.5" rx="2.75" fill="#e4e4e4" stroke="#000" stroke-width="1.2"/><ellipse cx="7" cy="5.75" rx="2.2" ry="1.6" fill="#000"/><ellipse cx="12" cy="13.25" rx="2.2" ry="1.6" fill="#000"/></svg>
<svg class="a" style="left:1149px;top:228px;" width="5" height="12" viewBox="0 0 5 12"><path d="M0 5.5 L4 0 L4 11 Z" fill="#3aa8f8"/><path d="M0.5 6 L4 10.5" stroke="#1a70b0" stroke-width="1"/></svg>
<div class="tx" style="left:1158px;top:223px;font-size:11.7px;color:#000000;font-weight:normal;font-style:italic;">PhysX Switch (Dynamic [Sleep])</div>
<svg class="a" style="left:1129px;top:246px;" width="19" height="19" viewBox="0 0 19 19"><rect x="0" y="0" width="19" height="19" fill="#000"/><rect x="1" y="1" width="17" height="17" fill="#9058e8"/><path d="M1 17 V14 Q9.5 10 18 14 V17 Z" fill="#9058e8" /><path d="M1 14 Q9.5 10 18 14" fill="none" stroke="#000" stroke-width="1" /><path d="M3 8 L8 13 L13 7" fill="none" stroke="#1a90ff" stroke-width="2" /><circle cx="14" cy="6" r="1.8" fill="#fff" stroke="#000" stroke-width="1"/></svg>
<div class="tx" style="left:1158px;top:246px;font-size:11.7px;color:#000000;font-weight:normal;font-style:italic;">PhysX Collision (Convex)</div>
<svg class="a" style="left:1399px;top:248px;" width="15" height="15" viewBox="0 0 15 15"><circle cx="7.5" cy="7.5" r="6" fill="#c8c8c8" stroke="#000" stroke-width="1.3"/></svg>
<div class="a" style="left:1118px;top:268px;width:288px;height:21px;background:#b0b4e0;"></div>
<svg class="a" style="left:1129px;top:269px;" width="19" height="19" viewBox="0 0 19 19"><rect x="0" y="0" width="19" height="19" fill="#000"/><rect x="1" y="1" width="17" height="17" fill="#4a4ab8"/><circle cx="8.5" cy="4" r="1.6" fill="#fff" stroke="#000" stroke-width="1"/><circle cx="4.5" cy="7.2" r="1.6" fill="#fff" stroke="#000" stroke-width="1"/><circle cx="4.5" cy="11.8" r="1.6" fill="#fff" stroke="#000" stroke-width="1"/><circle cx="8.5" cy="15" r="1.6" fill="#fff" stroke="#000" stroke-width="1"/><path d="M7.5 8.3 H12.5 V5.5 L17 9.5 L12.5 13.5 V10.7 H7.5 Z" fill="#000" /><path d="M8 8.8 H13 V6.8 L16 9.5 L13 12.2 V10.2 H8 Z" fill="#10ff10" /></svg>
<div class="tx" style="left:1158px;top:269px;font-size:11.7px;color:#000000;font-weight:normal;font-style:normal;">Export Particles (tyCache)</div>
<svg class="a" style="left:1129px;top:292px;" width="19" height="19" viewBox="0 0 19 19"><rect x="0" y="0" width="19" height="19" fill="#000"/><rect x="1" y="1" width="8" height="8" fill="#38c8c8"/><rect x="10" y="1" width="8" height="8" fill="#38c8c8"/><rect x="1" y="10" width="8" height="8" fill="#38c8c8"/><rect x="10" y="10" width="8" height="8" fill="#ffffff"/><rect x="11" y="11" width="6" height="6" fill="#38c8c8"/><path d="M12 12h1v1h-1zM15 11h1v1h-1zM14 13h1v1h-1zM16 14h1v1h-1zM12 14h1v1h-1zM13 16h1v1h-1zM15 15h1v1h-1z" fill="#000" /></svg>
<div class="tx" style="left:1158px;top:292px;font-size:11.7px;color:#000000;font-weight:normal;font-style:normal;">Display (Geometry)</div>
<svg class="a" style="left:1382px;top:294px;" width="15" height="15" viewBox="0 0 15 15"><circle cx="7.5" cy="7.5" r="6" fill="#f0e0e8" stroke="#000" stroke-width="1.3"/></svg>
<div class="a" style="left:767px;top:405px;width:290px;height:221px;background:#242424;border-radius:5px"></div>
<div class="a" style="left:762px;top:399px;width:290px;height:221px;background:#000;border-radius:5px"></div>
<div class="a" style="left:763px;top:400px;width:288px;height:219px;background:#c8c8c8;border-radius:4px;overflow:hidden"><div class="a" style="left:0;top:0;width:288px;height:24px;background:#74b02c"></div><div class="a" style="left:0;top:24px;width:288px;height:1px;background:#000"></div></div>
<div class="tx" style="left:762px;top:401px;width:263px;text-align:right;font-size:11.7px;color:#000">actor_woman</div>
<svg class="a" style="left:1034px;top:403px;shape-rendering:crispEdges" width="12" height="16" viewBox="0 0 12 16"><path d="M5 0h1v1h-1zM6 0h1v1h-1zM2 1h1v1h-1zM3 1h1v1h-1zM4 1h1v1h-1zM7 1h1v1h-1zM8 1h1v1h-1zM9 1h1v1h-1zM1 2h1v1h-1zM10 2h1v1h-1zM0 3h1v1h-1zM11 3h1v1h-1zM0 4h1v1h-1zM11 4h1v1h-1zM0 5h1v1h-1zM11 5h1v1h-1zM0 6h1v1h-1zM5 6h1v1h-1zM6 6h1v1h-1zM7 6h1v1h-1zM11 6h1v1h-1zM1 7h1v1h-1zM4 7h1v1h-1zM8 7h1v1h-1zM10 7h1v1h-1zM1 8h1v1h-1zM4 8h1v1h-1zM8 8h1v1h-1zM10 8h1v1h-1zM2 9h1v1h-1zM3 9h1v1h-1zM4 9h1v1h-1zM8 9h1v1h-1zM9 9h1v1h-1zM3 10h1v1h-1zM8 10h1v1h-1zM3 11h1v1h-1zM7 11h1v1h-1zM8 11h1v1h-1zM3 12h1v1h-1zM7 12h1v1h-1zM8 12h1v1h-1zM3 13h1v1h-1zM4 13h1v1h-1zM5 13h1v1h-1zM6 13h1v1h-1zM7 13h1v1h-1zM8 13h1v1h-1zM3 14h1v1h-1zM8 14h1v1h-1zM3 15h1v1h-1zM4 15h1v1h-1zM5 15h1v1h-1zM6 15h1v1h-1zM7 15h1v1h-1zM8 15h1v1h-1z" fill="#000"/><path d="M5 1h1v1h-1zM6 1h1v1h-1zM2 2h1v1h-1zM3 2h1v1h-1zM4 2h1v1h-1zM5 2h1v1h-1zM6 2h1v1h-1zM7 2h1v1h-1zM8 2h1v1h-1zM9 2h1v1h-1zM1 3h1v1h-1zM2 3h1v1h-1zM3 3h1v1h-1zM4 3h1v1h-1zM5 3h1v1h-1zM6 3h1v1h-1zM7 3h1v1h-1zM8 3h1v1h-1zM9 3h1v1h-1zM10 3h1v1h-1zM1 4h1v1h-1zM2 4h1v1h-1zM3 4h1v1h-1zM4 4h1v1h-1zM5 4h1v1h-1zM6 4h1v1h-1zM7 4h1v1h-1zM8 4h1v1h-1zM9 4h1v1h-1zM10 4h1v1h-1zM1 5h1v1h-1zM2 5h1v1h-1zM3 5h1v1h-1zM4 5h1v1h-1zM5 5h1v1h-1zM6 5h1v1h-1zM7 5h1v1h-1zM8 5h1v1h-1zM9 5h1v1h-1zM10 5h1v1h-1zM1 6h1v1h-1zM2 6h1v1h-1zM3 6h1v1h-1zM4 6h1v1h-1zM8 6h1v1h-1zM9 6h1v1h-1zM10 6h1v1h-1zM2 7h1v1h-1zM3 7h1v1h-1zM5 7h1v1h-1zM6 7h1v1h-1zM7 7h1v1h-1zM9 7h1v1h-1zM2 8h1v1h-1zM3 8h1v1h-1zM5 8h1v1h-1zM6 8h1v1h-1zM7 8h1v1h-1zM9 8h1v1h-1zM5 9h1v1h-1zM6 9h1v1h-1zM7 9h1v1h-1zM4 10h1v1h-1zM5 10h1v1h-1zM6 10h1v1h-1zM7 10h1v1h-1zM4 11h1v1h-1zM5 11h1v1h-1zM6 11h1v1h-1zM4 12h1v1h-1zM5 12h1v1h-1zM6 12h1v1h-1zM4 14h1v1h-1zM5 14h1v1h-1zM6 14h1v1h-1zM7 14h1v1h-1z" fill="#fff"/></svg>
<svg class="a" style="left:774px;top:427px;" width="19" height="19" viewBox="0 0 19 19"><rect x="0" y="0" width="19" height="19" fill="#000"/><rect x="1" y="1" width="17" height="17" fill="#74b02c"/><circle cx="5" cy="4.5" r="1.5" fill="#fff" stroke="#000" stroke-width="1"/><circle cx="14" cy="4.5" r="1.5" fill="#fff" stroke="#000" stroke-width="1"/><rect x="8.5" y="8.5" width="3" height="3" fill="#fff" stroke="#000" stroke-width="1"/><circle cx="5" cy="14.5" r="1.5" fill="#fff" stroke="#000" stroke-width="1"/><circle cx="14" cy="14.5" r="1.5" fill="#fff" stroke="#000" stroke-width="1"/></svg>
<div class="tx" style="left:803px;top:427px;font-size:11.7px;color:#000000;font-weight:normal;font-style:normal;">Birth (1001-1001: 1)</div>
<svg class="a" style="left:774px;top:450px;" width="19" height="19" viewBox="0 0 19 19"><rect x="0" y="0" width="19" height="19" fill="#000"/><rect x="1" y="1" width="17" height="17" fill="#d0d0ff"/><path d="M8 1.5 H11 V5 H8 Z" fill="#000" /><path d="M8.7 2.2 H10.3 V4.3 H8.7 Z" fill="#fff" /><path d="M6.5 5.5 H12.5 V11 H6.5 Z" fill="#000" /><path d="M7.3 6.2 H11.7 V10.3 H7.3 Z" fill="#3878c8" /><path d="M6.8 7 L3.8 10.5" fill="none" stroke="#000" stroke-width="1.8" /><path d="M6.8 7 L3.8 10.5" fill="none" stroke="#30d030" stroke-width="0.8" /><path d="M12.2 7 L15.2 10.5" fill="none" stroke="#000" stroke-width="1.8" /><path d="M12.2 7 L15.2 10.5" fill="none" stroke="#3080e0" stroke-width="0.8" /><path d="M7.3 10.5 H9.2 V16.5 H7.3 Z" fill="#000" /><path d="M9.8 10.5 H11.7 V16.5 H9.8 Z" fill="#000" /><path d="M7.8 11 H8.7 V16 H7.8 Z" fill="#30c030" /><path d="M10.3 11 H11.2 V16 H10.3 Z" fill="#3070e0" /></svg>
<div class="tx" style="left:803px;top:450px;font-size:11.7px;color:#000000;font-weight:normal;font-style:normal;">Actor</div>
<svg class="a" style="left:1044px;top:452px;" width="15" height="15" viewBox="0 0 15 15"><circle cx="7.5" cy="7.5" r="6" fill="#c8c8c8" stroke="#000" stroke-width="1.3"/></svg>
<svg class="a" style="left:774px;top:473px;" width="19" height="19" viewBox="0 0 19 19"><rect x="0" y="0" width="19" height="19" fill="#000"/><rect x="1" y="1" width="17" height="17" fill="#a878f8"/><path d="M3 6 L6 3 H16 V13 L13 16 H3 Z" fill="#000" /><path d="M4 6.5 L6.5 4 H15 V12.5 L12.5 15 H4 Z" fill="#fff" /><path d="M5 8 H12 V14 H5 Z" fill="#7a7a7a" /><path d="M12 8 L14 6 V12 L12 14 Z" fill="#c8c8c8" /></svg>
<div class="tx" style="left:803px;top:473px;font-size:11.7px;color:#000000;font-weight:normal;font-style:italic;">PhysX Shape (Convex Hull)</div>
<div class="a" style="left:773px;top:495px;width:21px;height:21px;background:#3aa8ff;"></div>
<svg class="a" style="left:774px;top:496px;" width="19" height="19" viewBox="0 0 19 19"><rect x="0" y="0" width="19" height="19" fill="#000"/><rect x="1" y="1" width="17" height="17" fill="#6a3ed0"/><path d="M3.5 3.5 H15.5 V15.5 H3.5 Z" fill="none" stroke="#c8b868" stroke-width="1" stroke-dasharray="1 1"/><circle cx="3.5" cy="3.5" r="1.6" fill="#fff" stroke="#000" stroke-width="1"/><circle cx="15.5" cy="3.5" r="1.6" fill="#fff" stroke="#000" stroke-width="1"/><circle cx="3.5" cy="15.5" r="1.6" fill="#fff" stroke="#000" stroke-width="1"/><circle cx="15.5" cy="15.5" r="1.6" fill="#fff" stroke="#000" stroke-width="1"/><path d="M7.5 9.5 V8.0 A2 2 0 0 1 11.5 8.0 V9.5" fill="none" stroke="#000" stroke-width="1.3"/><rect x="6.5" y="9.5" width="6" height="4.5" fill="#c4c4c4" stroke="#000" stroke-width="1.1"/></svg>
<svg class="a" style="left:794px;top:501px;" width="5" height="12" viewBox="0 0 5 12"><path d="M0 5.5 L4 0 L4 11 Z" fill="#3aa8f8"/><path d="M0.5 6 L4 10.5" stroke="#1a70b0" stroke-width="1"/></svg>
<div class="tx" style="left:803px;top:496px;font-size:11.7px;color:#000000;font-weight:normal;font-style:italic;">PhysX Bind (Joint | ID: 0)</div>
<svg class="a" style="left:1027px;top:498px;" width="15" height="15" viewBox="0 0 15 15"><circle cx="7.5" cy="7.5" r="6" fill="#d8ecf0" stroke="#000" stroke-width="1.3"/></svg>
<div class="a" style="left:773px;top:518px;width:21px;height:21px;background:#3aa8ff;"></div>
<svg class="a" style="left:774px;top:519px;" width="19" height="19" viewBox="0 0 19 19"><rect x="0" y="0" width="19" height="19" fill="#000"/><rect x="1" y="1" width="17" height="17" fill="#a070f0"/><rect x="3.5" y="3" width="12" height="5.5" rx="2.75" fill="#e4e4e4" stroke="#000" stroke-width="1.2"/><rect x="3.5" y="10.5" width="12" height="5.5" rx="2.75" fill="#e4e4e4" stroke="#000" stroke-width="1.2"/><ellipse cx="7" cy="5.75" rx="2.2" ry="1.6" fill="#000"/><ellipse cx="12" cy="13.25" rx="2.2" ry="1.6" fill="#000"/></svg>
<svg class="a" style="left:794px;top:524px;" width="5" height="12" viewBox="0 0 5 12"><path d="M0 5.5 L4 0 L4 11 Z" fill="#3aa8f8"/><path d="M0.5 6 L4 10.5" stroke="#1a70b0" stroke-width="1"/></svg>
<div class="tx" style="left:803px;top:519px;font-size:11.7px;color:#000000;font-weight:normal;font-style:italic;">PhysX Switch (Dynamic [Sleep])</div>
<svg class="a" style="left:774px;top:542px;" width="19" height="19" viewBox="0 0 19 19"><rect x="0" y="0" width="19" height="19" fill="#000"/><rect x="1" y="1" width="17" height="17" fill="#9058e8"/><path d="M1 17 V14 Q9.5 10 18 14 V17 Z" fill="#9058e8" /><path d="M1 14 Q9.5 10 18 14" fill="none" stroke="#000" stroke-width="1" /><path d="M3 8 L8 13 L13 7" fill="none" stroke="#1a90ff" stroke-width="2" /><circle cx="14" cy="6" r="1.8" fill="#fff" stroke="#000" stroke-width="1"/></svg>
<div class="tx" style="left:803px;top:542px;font-size:11.7px;color:#000000;font-weight:normal;font-style:italic;">PhysX Collision (Convex)</div>
<svg class="a" style="left:1044px;top:544px;" width="15" height="15" viewBox="0 0 15 15"><circle cx="7.5" cy="7.5" r="6" fill="#c8c8c8" stroke="#000" stroke-width="1.3"/></svg>
<div class="a" style="left:763px;top:564px;width:288px;height:21px;background:#b0b4e0;"></div>
<svg class="a" style="left:774px;top:565px;" width="19" height="19" viewBox="0 0 19 19"><rect x="0" y="0" width="19" height="19" fill="#000"/><rect x="1" y="1" width="17" height="17" fill="#4a4ab8"/><circle cx="8.5" cy="4" r="1.6" fill="#fff" stroke="#000" stroke-width="1"/><circle cx="4.5" cy="7.2" r="1.6" fill="#fff" stroke="#000" stroke-width="1"/><circle cx="4.5" cy="11.8" r="1.6" fill="#fff" stroke="#000" stroke-width="1"/><circle cx="8.5" cy="15" r="1.6" fill="#fff" stroke="#000" stroke-width="1"/><path d="M7.5 8.3 H12.5 V5.5 L17 9.5 L12.5 13.5 V10.7 H7.5 Z" fill="#000" /><path d="M8 8.8 H13 V6.8 L16 9.5 L13 12.2 V10.2 H8 Z" fill="#10ff10" /></svg>
<div class="tx" style="left:803px;top:565px;font-size:11.7px;color:#000000;font-weight:normal;font-style:normal;">Export Particles (tyCache)</div>
<svg class="a" style="left:774px;top:588px;" width="19" height="19" viewBox="0 0 19 19"><rect x="0" y="0" width="19" height="19" fill="#000"/><rect x="1" y="1" width="8" height="8" fill="#38c8c8"/><rect x="10" y="1" width="8" height="8" fill="#38c8c8"/><rect x="1" y="10" width="8" height="8" fill="#38c8c8"/><rect x="10" y="10" width="8" height="8" fill="#ffffff"/><rect x="11" y="11" width="6" height="6" fill="#38c8c8"/><path d="M12 12h1v1h-1zM15 11h1v1h-1zM14 13h1v1h-1zM16 14h1v1h-1zM12 14h1v1h-1zM13 16h1v1h-1zM15 15h1v1h-1z" fill="#000" /></svg>
<div class="tx" style="left:803px;top:588px;font-size:11.7px;color:#000000;font-weight:normal;font-style:normal;">Display (Geometry)</div>
<svg class="a" style="left:1027px;top:590px;" width="15" height="15" viewBox="0 0 15 15"><circle cx="7.5" cy="7.5" r="6" fill="#f0e0e8" stroke="#000" stroke-width="1.3"/></svg>
<div class="a" style="left:1120px;top:408px;width:290px;height:221px;background:#242424;border-radius:5px"></div>
<div class="a" style="left:1115px;top:402px;width:290px;height:221px;background:#000;border-radius:5px"></div>
<div class="a" style="left:1116px;top:403px;width:288px;height:219px;background:#c8c8c8;border-radius:4px;overflow:hidden"><div class="a" style="left:0;top:0;width:288px;height:24px;background:#74b02c"></div><div class="a" style="left:0;top:24px;width:288px;height:1px;background:#000"></div></div>
<div class="tx" style="left:1115px;top:404px;width:263px;text-align:right;font-size:11.7px;color:#000">actor_girl</div>
<svg class="a" style="left:1387px;top:406px;shape-rendering:crispEdges" width="12" height="16" viewBox="0 0 12 16"><path d="M5 0h1v1h-1zM6 0h1v1h-1zM2 1h1v1h-1zM3 1h1v1h-1zM4 1h1v1h-1zM7 1h1v1h-1zM8 1h1v1h-1zM9 1h1v1h-1zM1 2h1v1h-1zM10 2h1v1h-1zM0 3h1v1h-1zM11 3h1v1h-1zM0 4h1v1h-1zM11 4h1v1h-1zM0 5h1v1h-1zM11 5h1v1h-1zM0 6h1v1h-1zM5 6h1v1h-1zM6 6h1v1h-1zM7 6h1v1h-1zM11 6h1v1h-1zM1 7h1v1h-1zM4 7h1v1h-1zM8 7h1v1h-1zM10 7h1v1h-1zM1 8h1v1h-1zM4 8h1v1h-1zM8 8h1v1h-1zM10 8h1v1h-1zM2 9h1v1h-1zM3 9h1v1h-1zM4 9h1v1h-1zM8 9h1v1h-1zM9 9h1v1h-1zM3 10h1v1h-1zM8 10h1v1h-1zM3 11h1v1h-1zM7 11h1v1h-1zM8 11h1v1h-1zM3 12h1v1h-1zM7 12h1v1h-1zM8 12h1v1h-1zM3 13h1v1h-1zM4 13h1v1h-1zM5 13h1v1h-1zM6 13h1v1h-1zM7 13h1v1h-1zM8 13h1v1h-1zM3 14h1v1h-1zM8 14h1v1h-1zM3 15h1v1h-1zM4 15h1v1h-1zM5 15h1v1h-1zM6 15h1v1h-1zM7 15h1v1h-1zM8 15h1v1h-1z" fill="#000"/><path d="M5 1h1v1h-1zM6 1h1v1h-1zM2 2h1v1h-1zM3 2h1v1h-1zM4 2h1v1h-1zM5 2h1v1h-1zM6 2h1v1h-1zM7 2h1v1h-1zM8 2h1v1h-1zM9 2h1v1h-1zM1 3h1v1h-1zM2 3h1v1h-1zM3 3h1v1h-1zM4 3h1v1h-1zM5 3h1v1h-1zM6 3h1v1h-1zM7 3h1v1h-1zM8 3h1v1h-1zM9 3h1v1h-1zM10 3h1v1h-1zM1 4h1v1h-1zM2 4h1v1h-1zM3 4h1v1h-1zM4 4h1v1h-1zM5 4h1v1h-1zM6 4h1v1h-1zM7 4h1v1h-1zM8 4h1v1h-1zM9 4h1v1h-1zM10 4h1v1h-1zM1 5h1v1h-1zM2 5h1v1h-1zM3 5h1v1h-1zM4 5h1v1h-1zM5 5h1v1h-1zM6 5h1v1h-1zM7 5h1v1h-1zM8 5h1v1h-1zM9 5h1v1h-1zM10 5h1v1h-1zM1 6h1v1h-1zM2 6h1v1h-1zM3 6h1v1h-1zM4 6h1v1h-1zM8 6h1v1h-1zM9 6h1v1h-1zM10 6h1v1h-1zM2 7h1v1h-1zM3 7h1v1h-1zM5 7h1v1h-1zM6 7h1v1h-1zM7 7h1v1h-1zM9 7h1v1h-1zM2 8h1v1h-1zM3 8h1v1h-1zM5 8h1v1h-1zM6 8h1v1h-1zM7 8h1v1h-1zM9 8h1v1h-1zM5 9h1v1h-1zM6 9h1v1h-1zM7 9h1v1h-1zM4 10h1v1h-1zM5 10h1v1h-1zM6 10h1v1h-1zM7 10h1v1h-1zM4 11h1v1h-1zM5 11h1v1h-1zM6 11h1v1h-1zM4 12h1v1h-1zM5 12h1v1h-1zM6 12h1v1h-1zM4 14h1v1h-1zM5 14h1v1h-1zM6 14h1v1h-1zM7 14h1v1h-1z" fill="#fff"/></svg>
<svg class="a" style="left:1127px;top:430px;" width="19" height="19" viewBox="0 0 19 19"><rect x="0" y="0" width="19" height="19" fill="#000"/><rect x="1" y="1" width="17" height="17" fill="#74b02c"/><circle cx="5" cy="4.5" r="1.5" fill="#fff" stroke="#000" stroke-width="1"/><circle cx="14" cy="4.5" r="1.5" fill="#fff" stroke="#000" stroke-width="1"/><rect x="8.5" y="8.5" width="3" height="3" fill="#fff" stroke="#000" stroke-width="1"/><circle cx="5" cy="14.5" r="1.5" fill="#fff" stroke="#000" stroke-width="1"/><circle cx="14" cy="14.5" r="1.5" fill="#fff" stroke="#000" stroke-width="1"/></svg>
<div class="tx" style="left:1156px;top:430px;font-size:11.7px;color:#000000;font-weight:normal;font-style:normal;">Birth (1001-1001: 1)</div>
<svg class="a" style="left:1127px;top:453px;" width="19" height="19" viewBox="0 0 19 19"><rect x="0" y="0" width="19" height="19" fill="#000"/><rect x="1" y="1" width="17" height="17" fill="#d0d0ff"/><path d="M8 1.5 H11 V5 H8 Z" fill="#000" /><path d="M8.7 2.2 H10.3 V4.3 H8.7 Z" fill="#fff" /><path d="M6.5 5.5 H12.5 V11 H6.5 Z" fill="#000" /><path d="M7.3 6.2 H11.7 V10.3 H7.3 Z" fill="#3878c8" /><path d="M6.8 7 L3.8 10.5" fill="none" stroke="#000" stroke-width="1.8" /><path d="M6.8 7 L3.8 10.5" fill="none" stroke="#30d030" stroke-width="0.8" /><path d="M12.2 7 L15.2 10.5" fill="none" stroke="#000" stroke-width="1.8" /><path d="M12.2 7 L15.2 10.5" fill="none" stroke="#3080e0" stroke-width="0.8" /><path d="M7.3 10.5 H9.2 V16.5 H7.3 Z" fill="#000" /><path d="M9.8 10.5 H11.7 V16.5 H9.8 Z" fill="#000" /><path d="M7.8 11 H8.7 V16 H7.8 Z" fill="#30c030" /><path d="M10.3 11 H11.2 V16 H10.3 Z" fill="#3070e0" /></svg>
<div class="tx" style="left:1156px;top:453px;font-size:11.7px;color:#000000;font-weight:normal;font-style:normal;">Actor</div>
<svg class="a" style="left:1397px;top:455px;" width="15" height="15" viewBox="0 0 15 15"><circle cx="7.5" cy="7.5" r="6" fill="#c8c8c8" stroke="#000" stroke-width="1.3"/></svg>
<svg class="a" style="left:1127px;top:476px;" width="19" height="19" viewBox="0 0 19 19"><rect x="0" y="0" width="19" height="19" fill="#000"/><rect x="1" y="1" width="17" height="17" fill="#a878f8"/><path d="M3 6 L6 3 H16 V13 L13 16 H3 Z" fill="#000" /><path d="M4 6.5 L6.5 4 H15 V12.5 L12.5 15 H4 Z" fill="#fff" /><path d="M5 8 H12 V14 H5 Z" fill="#7a7a7a" /><path d="M12 8 L14 6 V12 L12 14 Z" fill="#c8c8c8" /></svg>
<div class="tx" style="left:1156px;top:476px;font-size:11.7px;color:#000000;font-weight:normal;font-style:italic;">PhysX Shape (Convex Hull)</div>
<div class="a" style="left:1126px;top:498px;width:21px;height:21px;background:#3aa8ff;"></div>
<svg class="a" style="left:1127px;top:499px;" width="19" height="19" viewBox="0 0 19 19"><rect x="0" y="0" width="19" height="19" fill="#000"/><rect x="1" y="1" width="17" height="17" fill="#6a3ed0"/><path d="M3.5 3.5 H15.5 V15.5 H3.5 Z" fill="none" stroke="#c8b868" stroke-width="1" stroke-dasharray="1 1"/><circle cx="3.5" cy="3.5" r="1.6" fill="#fff" stroke="#000" stroke-width="1"/><circle cx="15.5" cy="3.5" r="1.6" fill="#fff" stroke="#000" stroke-width="1"/><circle cx="3.5" cy="15.5" r="1.6" fill="#fff" stroke="#000" stroke-width="1"/><circle cx="15.5" cy="15.5" r="1.6" fill="#fff" stroke="#000" stroke-width="1"/><path d="M7.5 9.5 V8.0 A2 2 0 0 1 11.5 8.0 V9.5" fill="none" stroke="#000" stroke-width="1.3"/><rect x="6.5" y="9.5" width="6" height="4.5" fill="#c4c4c4" stroke="#000" stroke-width="1.1"/></svg>
<svg class="a" style="left:1147px;top:504px;" width="5" height="12" viewBox="0 0 5 12"><path d="M0 5.5 L4 0 L4 11 Z" fill="#3aa8f8"/><path d="M0.5 6 L4 10.5" stroke="#1a70b0" stroke-width="1"/></svg>
<div class="tx" style="left:1156px;top:499px;font-size:11.7px;color:#000000;font-weight:normal;font-style:italic;">PhysX Bind (Joint | ID: 0)</div>
<svg class="a" style="left:1380px;top:501px;" width="15" height="15" viewBox="0 0 15 15"><circle cx="7.5" cy="7.5" r="6" fill="#d8ecf0" stroke="#000" stroke-width="1.3"/></svg>
<div class="a" style="left:1126px;top:521px;width:21px;height:21px;background:#3aa8ff;"></div>
<svg class="a" style="left:1127px;top:522px;" width="19" height="19" viewBox="0 0 19 19"><rect x="0" y="0" width="19" height="19" fill="#000"/><rect x="1" y="1" width="17" height="17" fill="#a070f0"/><rect x="3.5" y="3" width="12" height="5.5" rx="2.75" fill="#e4e4e4" stroke="#000" stroke-width="1.2"/><rect x="3.5" y="10.5" width="12" height="5.5" rx="2.75" fill="#e4e4e4" stroke="#000" stroke-width="1.2"/><ellipse cx="7" cy="5.75" rx="2.2" ry="1.6" fill="#000"/><ellipse cx="12" cy="13.25" rx="2.2" ry="1.6" fill="#000"/></svg>
<svg class="a" style="left:1147px;top:527px;" width="5" height="12" viewBox="0 0 5 12"><path d="M0 5.5 L4 0 L4 11 Z" fill="#3aa8f8"/><path d="M0.5 6 L4 10.5" stroke="#1a70b0" stroke-width="1"/></svg>
<div class="tx" style="left:1156px;top:522px;font-size:11.7px;color:#000000;font-weight:normal;font-style:italic;">PhysX Switch (Dynamic [Sleep])</div>
<svg class="a" style="left:1127px;top:545px;" width="19" height="19" viewBox="0 0 19 19"><rect x="0" y="0" width="19" height="19" fill="#000"/><rect x="1" y="1" width="17" height="17" fill="#9058e8"/><path d="M1 17 V14 Q9.5 10 18 14 V17 Z" fill="#9058e8" /><path d="M1 14 Q9.5 10 18 14" fill="none" stroke="#000" stroke-width="1" /><path d="M3 8 L8 13 L13 7" fill="none" stroke="#1a90ff" stroke-width="2" /><circle cx="14" cy="6" r="1.8" fill="#fff" stroke="#000" stroke-width="1"/></svg>
<div class="tx" style="left:1156px;top:545px;font-size:11.7px;color:#000000;font-weight:normal;font-style:italic;">PhysX Collision (Convex)</div>
<svg class="a" style="left:1397px;top:547px;" width="15" height="15" viewBox="0 0 15 15"><circle cx="7.5" cy="7.5" r="6" fill="#c8c8c8" stroke="#000" stroke-width="1.3"/></svg>
<div class="a" style="left:1116px;top:567px;width:288px;height:21px;background:#6666e0;"></div>
<svg class="a" style="left:1127px;top:568px;" width="19" height="19" viewBox="0 0 19 19"><rect x="0" y="0" width="19" height="19" fill="#000"/><rect x="1" y="1" width="17" height="17" fill="#4a4ab8"/><circle cx="8.5" cy="4" r="1.6" fill="#fff" stroke="#000" stroke-width="1"/><circle cx="4.5" cy="7.2" r="1.6" fill="#fff" stroke="#000" stroke-width="1"/><circle cx="4.5" cy="11.8" r="1.6" fill="#fff" stroke="#000" stroke-width="1"/><circle cx="8.5" cy="15" r="1.6" fill="#fff" stroke="#000" stroke-width="1"/><path d="M7.5 8.3 H12.5 V5.5 L17 9.5 L12.5 13.5 V10.7 H7.5 Z" fill="#000" /><path d="M8 8.8 H13 V6.8 L16 9.5 L13 12.2 V10.2 H8 Z" fill="#10ff10" /></svg>
<div class="tx" style="left:1156px;top:568px;font-size:11.7px;color:#ffffff;font-weight:normal;font-style:normal;">Export Particles (tyCache)</div>
<svg class="a" style="left:1127px;top:591px;" width="19" height="19" viewBox="0 0 19 19"><rect x="0" y="0" width="19" height="19" fill="#000"/><rect x="1" y="1" width="8" height="8" fill="#38c8c8"/><rect x="10" y="1" width="8" height="8" fill="#38c8c8"/><rect x="1" y="10" width="8" height="8" fill="#38c8c8"/><rect x="10" y="10" width="8" height="8" fill="#ffffff"/><rect x="11" y="11" width="6" height="6" fill="#38c8c8"/><path d="M12 12h1v1h-1zM15 11h1v1h-1zM14 13h1v1h-1zM16 14h1v1h-1zM12 14h1v1h-1zM13 16h1v1h-1zM15 15h1v1h-1z" fill="#000" /></svg>
<div class="tx" style="left:1156px;top:591px;font-size:11.7px;color:#000000;font-weight:normal;font-style:normal;">Display (Geometry)</div>
<svg class="a" style="left:1380px;top:593px;" width="15" height="15" viewBox="0 0 15 15"><circle cx="7.5" cy="7.5" r="6" fill="#f0e0e8" stroke="#000" stroke-width="1.3"/></svg>
<div class="a" style="left:1px;top:743px;width:1498px;height:9px;background:#c8c8c8;"></div>
<div class="a" style="left:1px;top:744px;width:1499px;height:7px;background:#3c3c3c;"></div>
<div class="a" style="left:3px;top:745px;width:1496px;height:4px;background:#888888;border-radius:2px"></div>
<div class="a" style="left:1px;top:752px;width:1498px;height:182px;background:#c8c8c8;"></div>
<div class="a" style="left:1px;top:752px;width:1305px;height:180px;background:#454545;"></div>
<div class="a" style="left:1306px;top:752px;width:145px;height:40px;background:#454545;"></div>
<div class="a" style="left:1016px;top:832px;width:145px;height:20px;background:#6666e0;"></div>
<svg class="a" style="left:12px;top:752px;" width="19" height="19" viewBox="0 0 19 19"><rect x="0" y="0" width="19" height="19" fill="#000"/><rect x="1" y="1" width="17" height="17" fill="#08a0ff"/><rect x="10.5" y="3.5" width="3" height="3" fill="#08a0ff" stroke="#000" stroke-width="1"/><rect x="13.5" y="3.5" width="3" height="3" fill="#08a0ff" stroke="#000" stroke-width="1"/><rect x="13.5" y="6.5" width="3" height="3" fill="#08a0ff" stroke="#000" stroke-width="1"/><path d="M11 8 L5 14" fill="none" stroke="#000" stroke-width="1" stroke-dasharray="1.5 1"/><path d="M4 10 V14.5 H8.5 Z" fill="#000" /><circle cx="3.5" cy="10" r="1.5" fill="#fff" stroke="#000" stroke-width="1"/><circle cx="3.5" cy="15" r="1.5" fill="#fff" stroke="#000" stroke-width="1"/><circle cx="8" cy="15" r="1.5" fill="#fff" stroke="#000" stroke-width="1"/></svg>
<div class="tx" style="left:41px;top:752px;font-size:11.7px;color:#f6f6f6;font-weight:normal;font-style:normal;">Flow Update</div>
<svg class="a" style="left:12px;top:772px;" width="19" height="19" viewBox="0 0 19 19"><rect x="0" y="0" width="19" height="19" fill="#000"/><rect x="1" y="1" width="17" height="17" fill="#08a0ff"/><path d="M4 4 Q2 9 8 9 Q12 10 8 13 Q4 16 8 16 Q13 16 13 10 Q13 6 15 4" fill="none" stroke="#000" stroke-width="1.2" /><path d="M2 5 L4 2 L6 5 Z" fill="#000" /><path d="M13 5 L16 3 L16 7 Z" fill="#000" /></svg>
<div class="tx" style="left:41px;top:772px;font-size:11.7px;color:#f6f6f6;font-weight:normal;font-style:normal;">Fluid Force</div>
<svg class="a" style="left:12px;top:792px;" width="19" height="19" viewBox="0 0 19 19"><rect x="0" y="0" width="19" height="19" fill="#000"/><rect x="1" y="1" width="17" height="17" fill="#08a0ff"/><ellipse cx="9.5" cy="5" rx="7" ry="2.5" fill="#a8e0ff" stroke="#000"/><path d="M9.5 4 V15" fill="none" stroke="#000" stroke-width="1.2" /><path d="M6 12 L9.5 16 L13 12" fill="none" stroke="#000" stroke-width="1.2" /></svg>
<div class="tx" style="left:41px;top:792px;font-size:11.7px;color:#f6f6f6;font-weight:normal;font-style:normal;">Force</div>
<svg class="a" style="left:12px;top:812px;" width="19" height="19" viewBox="0 0 19 19"><rect x="0" y="0" width="19" height="19" fill="#000"/><rect x="1" y="1" width="17" height="17" fill="#08a0ff"/><rect x="2.5" y="2.5" width="3" height="3" fill="#9ad8ff" stroke="#000" stroke-width="1"/><path d="M6 4 H13 V12" fill="none" stroke="#000" stroke-width="1.2" /><path d="M10.5 10 L13 13 L15.5 10" fill="none" stroke="#000" stroke-width="1.2" /><path d="M4 7 V15" fill="none" stroke="#000" stroke-width="1" stroke-dasharray="1 1"/><path d="M2 13 L4 15.5 L6 13" fill="none" stroke="#000" stroke-width="1" /><rect x="11.5" y="13.5" width="4" height="4" fill="#fff" stroke="#000" stroke-width="1"/></svg>
<div class="tx" style="left:41px;top:812px;font-size:11.7px;color:#f6f6f6;font-weight:normal;font-style:normal;">Integrate</div>
<svg class="a" style="left:12px;top:832px;" width="19" height="19" viewBox="0 0 19 19"><rect x="0" y="0" width="19" height="19" fill="#000"/><rect x="1" y="1" width="17" height="17" fill="#08a0ff"/><path d="M9.5 3 V16 M3 9.5 H16" fill="none" stroke="#000" stroke-width="1.5" /><path d="M9.5 2 L12 5 H7 Z M9.5 17 L12 14 H7 Z M2 9.5 L5 7 V12 Z M17 9.5 L14 7 V12 Z" fill="#000" /><path d="M6 2.5 H13 M6 16.5 H13 M2.5 6 V13 M16.5 6 V13" fill="none" stroke="#ff2020" stroke-width="1" /><circle cx="9.5" cy="9.5" r="1.2" fill="#fff" stroke="#000" stroke-width="1"/></svg>
<div class="tx" style="left:41px;top:832px;font-size:11.7px;color:#f6f6f6;font-weight:normal;font-style:normal;">Limiter</div>
<svg class="a" style="left:12px;top:852px;" width="19" height="19" viewBox="0 0 19 19"><rect x="0" y="0" width="19" height="19" fill="#000"/><rect x="1" y="1" width="17" height="17" fill="#08a0ff"/><circle cx="9.5" cy="4" r="1.8" fill="none" stroke="#000"/><path d="M5 6 H14 L16 16 H3 Z" fill="#000" /><path d="M6 7 H13 L14.5 15 H4.5 Z" fill="#9ad8ff" /><text x="5" y="13.5" font-family="Liberation Sans" font-size="5.5" font-weight="bold" fill="#000">KG</text></svg>
<div class="tx" style="left:41px;top:852px;font-size:11.7px;color:#f6f6f6;font-weight:normal;font-style:normal;">Mass</div>
<svg class="a" style="left:12px;top:872px;" width="19" height="19" viewBox="0 0 19 19"><rect x="0" y="0" width="19" height="19" fill="#000"/><rect x="1" y="1" width="17" height="17" fill="#08a0ff"/><path d="M1 17 V9 Q9.5 3 18 9 V17 Z" fill="#9ad8ff" /><path d="M1 9 Q9.5 3 18 9" fill="none" stroke="#000" stroke-width="1" /><rect x="8.5" y="2.5" width="3" height="3" fill="#fff" stroke="#000" stroke-width="1"/><path d="M7.5 11 V9.5 A2 2 0 0 1 11.5 9.5 V11" fill="none" stroke="#000" stroke-width="1.3"/><rect x="6.5" y="11" width="6" height="4.5" fill="#c8c8c8" stroke="#000" stroke-width="1.1"/></svg>
<div class="tx" style="left:41px;top:872px;font-size:11.7px;color:#f6f6f6;font-weight:normal;font-style:normal;">Object Bind</div>
<svg class="a" style="left:12px;top:892px;" width="19" height="19" viewBox="0 0 19 19"><rect x="0" y="0" width="19" height="19" fill="#000"/><rect x="1" y="1" width="17" height="17" fill="#08a0ff"/><path d="M2.5 16.5 L16 3" fill="none" stroke="#000" stroke-width="1" /><path d="M16.5 2 V6.5 L12 2 Z" fill="#000" /><rect x="8.5" y="8.5" width="3" height="3" fill="#fff" stroke="#000" stroke-width="1"/><circle cx="5" cy="6" r="1.3" fill="#fff" stroke="#000" stroke-width=".7"/><circle cx="9.5" cy="3.5" r="1.3" fill="#fff" stroke="#000" stroke-width=".7"/><circle cx="4" cy="11" r="1.3" fill="#fff" stroke="#000" stroke-width=".7"/><circle cx="14.5" cy="9.5" r="1.3" fill="#fff" stroke="#000" stroke-width=".7"/><circle cx="7" cy="15" r="1.3" fill="#fff" stroke="#000" stroke-width=".7"/><circle cx="11.5" cy="15" r="1.3" fill="#fff" stroke="#000" stroke-width=".7"/><circle cx="15" cy="13.5" r="1.3" fill="#fff" stroke="#000" stroke-width=".7"/></svg>
<div class="tx" style="left:41px;top:892px;font-size:11.7px;color:#f6f6f6;font-weight:normal;font-style:normal;">Particle Force</div>
<svg class="a" style="left:12px;top:912px;" width="19" height="19" viewBox="0 0 19 19"><rect x="0" y="0" width="19" height="19" fill="#000"/><rect x="1" y="1" width="17" height="17" fill="#08a0ff"/><path d="M2.5 2.5 H10.5 V8.5 H2.5 Z M8.5 10.5 H16.5 V16.5 H8.5 Z" fill="none" stroke="#c0ecff" stroke-width="1" stroke-dasharray="1 1"/><circle cx="4.5" cy="5.5" r="1" fill="#fff" stroke="#000" stroke-width="1"/><circle cx="8" cy="5.5" r="1" fill="#fff" stroke="#000" stroke-width="1"/><circle cx="10.5" cy="13.5" r="1" fill="#fff" stroke="#000" stroke-width="1"/><circle cx="14" cy="13.5" r="1" fill="#fff" stroke="#000" stroke-width="1"/></svg>
<div class="tx" style="left:41px;top:912px;font-size:11.7px;color:#f6f6f6;font-weight:normal;font-style:normal;">Particle Groups</div>
<svg class="a" style="left:157px;top:752px;" width="19" height="19" viewBox="0 0 19 19"><rect x="0" y="0" width="19" height="19" fill="#000"/><rect x="1" y="1" width="17" height="17" fill="#08a0ff"/><path d="M3 4 H11 Q15 4 15 7 Q15 10 11 10 H7 Q4 10 4 12.5 Q4 15 7 15 H14" fill="none" stroke="#000" stroke-width="1.5" /><path d="M13 12 L17 15 L13 17 Z" fill="#000" /></svg>
<div class="tx" style="left:186px;top:752px;font-size:11.7px;color:#f6f6f6;font-weight:normal;font-style:normal;">Path Follow</div>
<svg class="a" style="left:157px;top:772px;" width="19" height="19" viewBox="0 0 19 19"><rect x="0" y="0" width="19" height="19" fill="#000"/><rect x="1" y="1" width="17" height="17" fill="#08a0ff"/><circle cx="5.5" cy="5.5" r="3" fill="#a8e0ff" stroke="#000"/><rect x="4.5" y="4.5" width="2" height="2" fill="#fff" stroke="#000" stroke-width="1"/><path d="M9 9 L16 16" fill="none" stroke="#fff" stroke-width="1.2" stroke-dasharray="1 1.5"/></svg>
<div class="tx" style="left:186px;top:772px;font-size:11.7px;color:#f6f6f6;font-weight:normal;font-style:normal;">Point Force</div>
<svg class="a" style="left:157px;top:792px;" width="19" height="19" viewBox="0 0 19 19"><rect x="0" y="0" width="19" height="19" fill="#000"/><rect x="1" y="1" width="17" height="17" fill="#08a0ff"/><path d="M4.5 4.5 H14.5 V14.5 H4.5 Z" fill="none" stroke="#000" stroke-width="1" /><rect x="3.5" y="3.5" width="2" height="2" fill="#fff" stroke="#000" stroke-width="1"/><rect x="13.5" y="3.5" width="2" height="2" fill="#fff" stroke="#000" stroke-width="1"/><rect x="3.5" y="13.5" width="2" height="2" fill="#fff" stroke="#000" stroke-width="1"/><rect x="13.5" y="13.5" width="2" height="2" fill="#fff" stroke="#000" stroke-width="1"/><rect x="8.5" y="8.5" width="3" height="3" fill="#fff" stroke="#000" stroke-width="1"/></svg>
<div class="tx" style="left:186px;top:792px;font-size:11.7px;color:#f6f6f6;font-weight:normal;font-style:normal;">Position Icon</div>
<svg class="a" style="left:157px;top:812px;" width="19" height="19" viewBox="0 0 19 19"><rect x="0" y="0" width="19" height="19" fill="#000"/><rect x="1" y="1" width="17" height="17" fill="#08a0ff"/><path d="M4 6 L6 4 H15 V13 L13 15 H4 Z" fill="#000" /><path d="M5 7 H12 V14 H5 Z" fill="#e4e4e4" /><path d="M12 7 L14 5 V13 L12 14 Z" fill="#a0a0a0" /><circle cx="4.5" cy="6.5" r="1.2" fill="#fff" stroke="#000" stroke-width="1"/><circle cx="12.5" cy="6.5" r="1.2" fill="#fff" stroke="#000" stroke-width="1"/><circle cx="4.5" cy="14.5" r="1.2" fill="#fff" stroke="#000" stroke-width="1"/><circle cx="12.5" cy="14.5" r="1.2" fill="#fff" stroke="#000" stroke-width="1"/><circle cx="6.5" cy="3.5" r="1.2" fill="#fff" stroke="#000" stroke-width="1"/><circle cx="15" cy="3.5" r="1.2" fill="#fff" stroke="#000" stroke-width="1"/><circle cx="15" cy="12" r="1.2" fill="#fff" stroke="#000" stroke-width="1"/></svg>
<div class="tx" style="left:186px;top:812px;font-size:11.7px;color:#f6f6f6;font-weight:normal;font-style:normal;">Position Object</div>
<svg class="a" style="left:157px;top:832px;" width="19" height="19" viewBox="0 0 19 19"><rect x="0" y="0" width="19" height="19" fill="#000"/><rect x="1" y="1" width="17" height="17" fill="#08a0ff"/><path d="M1 17 V14 Q9.5 8 18 14 V17 Z" fill="#9ad8ff" /><path d="M1 14 Q9.5 8 18 14" fill="none" stroke="#000" stroke-width="1" /><path d="M3 3 L8 8 M7 2 L16 11 M11 2 L15 6" fill="none" stroke="#000" stroke-width="1" /><circle cx="9.5" cy="11" r="1.8" fill="#fff" stroke="#000" stroke-width="1"/></svg>
<div class="tx" style="left:186px;top:832px;font-size:11.7px;color:#f6f6f6;font-weight:normal;font-style:normal;">Position Raycast</div>
<svg class="a" style="left:157px;top:852px;" width="19" height="19" viewBox="0 0 19 19"><rect x="0" y="0" width="19" height="19" fill="#000"/><rect x="1" y="1" width="17" height="17" fill="#08a0ff"/><path d="M6 2 H13 V9 H6 Z" fill="#000" /><path d="M7 3 H12 V5 H7 Z" fill="#f0e080" /><path d="M7 6 H12 V8 H7 Z" fill="#fff" /><text x="2.5" y="17" font-family="Liberation Sans" font-size="5.8" font-weight="bold" fill="#000">PRT</text></svg>
<div class="tx" style="left:186px;top:852px;font-size:11.7px;color:#f6f6f6;font-weight:normal;font-style:normal;">PRT Update</div>
<svg class="a" style="left:157px;top:872px;" width="19" height="19" viewBox="0 0 19 19"><rect x="0" y="0" width="19" height="19" fill="#000"/><rect x="1" y="1" width="17" height="17" fill="#08a0ff"/><path d="M1 17 V14 Q9.5 8 18 14 V17 Z" fill="#9ad8ff" /><path d="M1 14 Q9.5 8 18 14" fill="none" stroke="#000" stroke-width="1" /><path d="M9.5 16 V5 M6 9 L9.5 5.5 L13 9" fill="none" stroke="#000" stroke-width="1" /><circle cx="9.5" cy="3" r="1.2" fill="#fff" stroke="#000" stroke-width="1"/></svg>
<div class="tx" style="left:186px;top:872px;font-size:11.7px;color:#f6f6f6;font-weight:normal;font-style:normal;">Push In/Out</div>
<svg class="a" style="left:157px;top:892px;" width="19" height="19" viewBox="0 0 19 19"><rect x="0" y="0" width="19" height="19" fill="#000"/><rect x="1" y="1" width="17" height="17" fill="#08a0ff"/><path d="M4 4 H15 V15 H4 Z M9.5 4 V15 M4 9.5 H15" fill="none" stroke="#c0ecff" stroke-width="1" stroke-dasharray="1 1"/><rect x="3.5" y="3.5" width="2" height="2" fill="#fff" stroke="#000" stroke-width="1"/><rect x="3.5" y="8.5" width="2" height="2" fill="#fff" stroke="#000" stroke-width="1"/><rect x="3.5" y="13.5" width="2" height="2" fill="#fff" stroke="#000" stroke-width="1"/><rect x="8.5" y="3.5" width="2" height="2" fill="#fff" stroke="#000" stroke-width="1"/><rect x="8.5" y="8.5" width="2" height="2" fill="#fff" stroke="#000" stroke-width="1"/><rect x="8.5" y="13.5" width="2" height="2" fill="#fff" stroke="#000" stroke-width="1"/><rect x="13.5" y="3.5" width="2" height="2" fill="#fff" stroke="#000" stroke-width="1"/><rect x="13.5" y="8.5" width="2" height="2" fill="#fff" stroke="#000" stroke-width="1"/><rect x="13.5" y="13.5" width="2" height="2" fill="#fff" stroke="#000" stroke-width="1"/></svg>
<div class="tx" style="left:186px;top:892px;font-size:11.7px;color:#f6f6f6;font-weight:normal;font-style:normal;">Rasterize</div>
<svg class="a" style="left:157px;top:912px;" width="19" height="19" viewBox="0 0 19 19"><rect x="0" y="0" width="19" height="19" fill="#000"/><rect x="1" y="1" width="17" height="17" fill="#08a0ff"/><path d="M4 10 A5.5 5.5 0 0 1 14 6" fill="none" stroke="#000" stroke-width="1.3" /><path d="M12 4 L16 4 L15 8 Z" fill="#000" /><path d="M15 9 A5.5 5.5 0 0 1 5 13" fill="none" stroke="#000" stroke-width="1.3" /><path d="M7 15 L3 15 L4 11 Z" fill="#000" /><rect x="8.5" y="8.5" width="3" height="3" fill="#fff" stroke="#000" stroke-width="1"/></svg>
<div class="tx" style="left:186px;top:912px;font-size:11.7px;color:#f6f6f6;font-weight:normal;font-style:normal;">Rotation</div>
<svg class="a" style="left:302px;top:752px;" width="19" height="19" viewBox="0 0 19 19"><rect x="0" y="0" width="19" height="19" fill="#000"/><rect x="1" y="1" width="17" height="17" fill="#08a0ff"/><path d="M3 3 H16 V16 H3 Z" fill="#000" /><path d="M4 4 H15 V15 H4 Z" fill="#9ad8ff" /><rect x="3.5" y="11.5" width="5" height="5" fill="#fff" stroke="#000" stroke-width="1"/><path d="M8 11 L14 5 M10 5 H14 V9" fill="none" stroke="#000" stroke-width="1.2" /></svg>
<div class="tx" style="left:331px;top:752px;font-size:11.7px;color:#f6f6f6;font-weight:normal;font-style:normal;">Scale</div>
<svg class="a" style="left:302px;top:772px;" width="19" height="19" viewBox="0 0 19 19"><rect x="0" y="0" width="19" height="19" fill="#000"/><rect x="1" y="1" width="17" height="17" fill="#08a0ff"/><circle cx="7" cy="12" r="4.5" fill="#f0d040" stroke="#000"/><path d="M7 12 m-2 0 a2 2 0 1 1 2 2" fill="none" stroke="#000" stroke-width="1" /><path d="M11 9 Q14 8 14 5 H16 V11 Q16 16 11 16 H3 V15 H11 Z" fill="#60c040" /><path d="M11 9 Q14 8 14 5 H16 V11 Q16 16 11 16 H3" fill="none" stroke="#000" stroke-width="1" /><path d="M14 5 L13 2 M16 5 L17 2" fill="none" stroke="#000" stroke-width="1" /></svg>
<div class="tx" style="left:331px;top:772px;font-size:11.7px;color:#f6f6f6;font-weight:normal;font-style:normal;">Slow</div>
<svg class="a" style="left:302px;top:792px;" width="19" height="19" viewBox="0 0 19 19"><rect x="0" y="0" width="19" height="19" fill="#000"/><rect x="1" y="1" width="17" height="17" fill="#08a0ff"/><path d="M3 3 L15 15" fill="none" stroke="#000" stroke-width="2" /><path d="M16 16 L10 15 L15 10 Z" fill="#000" /><rect x="8.5" y="8.5" width="3" height="3" fill="#fff" stroke="#000" stroke-width="1"/><path d="M11 3 L15 7 M3 11 L7 15" fill="none" stroke="#000" stroke-width="1" /></svg>
<div class="tx" style="left:331px;top:792px;font-size:11.7px;color:#f6f6f6;font-weight:normal;font-style:normal;">Speed</div>
<svg class="a" style="left:302px;top:812px;" width="19" height="19" viewBox="0 0 19 19"><rect x="0" y="0" width="19" height="19" fill="#000"/><rect x="1" y="1" width="17" height="17" fill="#08a0ff"/><path d="M14 5 A6 6 0 1 0 15.5 10" fill="none" stroke="#000" stroke-width="1.3" /><path d="M12 3 L16 4 L14 8 Z" fill="#000" /><path d="M1 8 H6 V11 H1 Z" fill="#9ad8ff" /><path d="M9.5 6.5 A3 3 0 1 0 12.5 9.5" fill="none" stroke="#000" stroke-width="1" /><rect x="8.5" y="8.5" width="3" height="3" fill="#fff" stroke="#000" stroke-width="1"/></svg>
<div class="tx" style="left:331px;top:812px;font-size:11.7px;color:#f6f6f6;font-weight:normal;font-style:normal;">Spin</div>
<svg class="a" style="left:302px;top:832px;" width="19" height="19" viewBox="0 0 19 19"><rect x="0" y="0" width="19" height="19" fill="#000"/><rect x="1" y="1" width="17" height="17" fill="#08a0ff"/><rect x="3.5" y="3.5" width="2" height="2" fill="#fff" stroke="#000" stroke-width="1"/><rect x="8.5" y="2.5" width="2" height="2" fill="#fff" stroke="#000" stroke-width="1"/><rect x="13.5" y="3.5" width="2" height="2" fill="#fff" stroke="#000" stroke-width="1"/><rect x="2.5" y="8.5" width="2" height="2" fill="#fff" stroke="#000" stroke-width="1"/><rect x="14.5" y="8.5" width="2" height="2" fill="#fff" stroke="#000" stroke-width="1"/><rect x="3.5" y="13.5" width="2" height="2" fill="#fff" stroke="#000" stroke-width="1"/><rect x="8.5" y="14.5" width="2" height="2" fill="#fff" stroke="#000" stroke-width="1"/><rect x="13.5" y="13.5" width="2" height="2" fill="#fff" stroke="#000" stroke-width="1"/><rect x="7.5" y="7.5" width="4" height="4" fill="#fff" stroke="#000" stroke-width="1"/></svg>
<div class="tx" style="left:331px;top:832px;font-size:11.7px;color:#f6f6f6;font-weight:normal;font-style:normal;">Spread</div>
<svg class="a" style="left:302px;top:852px;" width="19" height="19" viewBox="0 0 19 19"><rect x="0" y="0" width="19" height="19" fill="#000"/><rect x="1" y="1" width="17" height="17" fill="#08a0ff"/><path d="M6 2 H13 L17 6 V13 L13 17 H6 L2 13 V6 Z" fill="#fff" /><path d="M6.5 3 H12.5 L16 6.5 V12.5 L12.5 16 H6.5 L3 12.5 V6.5 Z" fill="#e02020" /><text x="3.2" y="11.8" font-family="Liberation Sans" font-size="4.4" font-weight="bold" fill="#fff">STOP</text></svg>
<div class="tx" style="left:331px;top:852px;font-size:11.7px;color:#f6f6f6;font-weight:normal;font-style:normal;">Stop</div>
<svg class="a" style="left:302px;top:872px;" width="19" height="19" viewBox="0 0 19 19"><rect x="0" y="0" width="19" height="19" fill="#000"/><rect x="1" y="1" width="17" height="17" fill="#08a0ff"/><path d="M1 17 V11 Q9.5 4 18 11 V17 Z" fill="#9ad8ff" /><path d="M1 11 Q9.5 4 18 11" fill="none" stroke="#000" stroke-width="1" /><path d="M4 5 Q9.5 1 15 5" fill="none" stroke="#000" stroke-width="1" /><path d="M14 3 L17 5 L14 7 Z" fill="#000" /><circle cx="9.5" cy="6" r="1.5" fill="#fff" stroke="#000" stroke-width="1"/></svg>
<div class="tx" style="left:331px;top:872px;font-size:11.7px;color:#f6f6f6;font-weight:normal;font-style:normal;">Surface Force</div>
<svg class="a" style="left:302px;top:892px;" width="19" height="19" viewBox="0 0 19 19"><rect x="0" y="0" width="19" height="19" fill="#000"/><rect x="1" y="1" width="17" height="17" fill="#50d890"/><path d="M2 2 L9.5 9.5 L17 2 M2 17 L9.5 9.5 L17 17 M9.5 2 V17" fill="none" stroke="#000" stroke-width="1" /><rect x="8.5" y="3.5" width="2" height="2" fill="#fff" stroke="#000" stroke-width="1"/><rect x="3.5" y="8.5" width="2" height="2" fill="#fff" stroke="#000" stroke-width="1"/><rect x="13.5" y="8.5" width="2" height="2" fill="#fff" stroke="#000" stroke-width="1"/><rect x="8.5" y="13.5" width="2" height="2" fill="#fff" stroke="#000" stroke-width="1"/><rect x="8.5" y="8.5" width="2" height="2" fill="#fff" stroke="#000" stroke-width="1"/></svg>
<div class="tx" style="left:331px;top:892px;font-size:11.7px;color:#f6f6f6;font-weight:normal;font-style:normal;">Cluster</div>
<svg class="a" style="left:302px;top:912px;" width="19" height="19" viewBox="0 0 19 19"><rect x="0" y="0" width="19" height="19" fill="#000"/><rect x="1" y="1" width="17" height="17" fill="#30c8b8"/><text x="2.5" y="7" font-family="Liberation Sans" font-size="5.5" font-weight="bold" fill="#000">XYZ</text><path d="M5 8 V12 M9.5 8 V12 M14 8 V12" fill="none" stroke="#000" stroke-width="1" stroke-dasharray="1 1"/><path d="M3 13 H16 V17 H3 Z" fill="#000" /><path d="M4 14 H15 V16 H4 Z" fill="#50e0a0" /></svg>
<div class="tx" style="left:331px;top:912px;font-size:11.7px;color:#f6f6f6;font-weight:normal;font-style:normal;">Custom Properties</div>
<svg class="a" style="left:447px;top:752px;" width="19" height="19" viewBox="0 0 19 19"><rect x="0" y="0" width="19" height="19" fill="#000"/><rect x="1" y="1" width="17" height="17" fill="#38c8c8"/><path d="M4 4 Q2 9 8 9 Q12 10 8 13 Q4 16 8 16 Q13 16 13 10 Q13 6 15 4" fill="none" stroke="#000" stroke-width="1.2" /><path d="M2 5 L4 2 L6 5 Z" fill="#000" /><path d="M13 5 L16 3 L16 7 Z" fill="#000" /></svg>
<div class="tx" style="left:476px;top:752px;font-size:11.7px;color:#f6f6f6;font-weight:normal;font-style:normal;">Fluid Properties</div>
<svg class="a" style="left:447px;top:772px;" width="19" height="19" viewBox="0 0 19 19"><rect x="0" y="0" width="19" height="19" fill="#000"/><rect x="1" y="1" width="17" height="17" fill="#38c8c8"/><path d="M3 3 H16 V16 H3 Z" fill="#60e8a0" /><path d="M2.5 5 V2.5 H5 M14 2.5 H16.5 V5 M2.5 14 V16.5 H5 M14 16.5 H16.5 V14" fill="none" stroke="#000" stroke-width="1" /><text x="2.6" y="13.6" font-family="Liberation Sans" font-size="9" font-weight="bold" fill="#000">C#</text></svg>
<div class="tx" style="left:476px;top:772px;font-size:11.7px;color:#f6f6f6;font-weight:normal;font-style:normal;">Script</div>
<svg class="a" style="left:447px;top:792px;" width="19" height="19" viewBox="0 0 19 19"><rect x="0" y="0" width="19" height="19" fill="#000"/><rect x="1" y="1" width="17" height="17" fill="#38c8c8"/><rect x="2.5" y="4.5" width="2" height="2" fill="#fff" stroke="#000" stroke-width="1"/><path d="M5 5.5 H11" fill="none" stroke="#000" stroke-width="1" stroke-dasharray="1 1"/><circle cx="14.5" cy="5.5" r="2.5" fill="#fff" stroke="#ff2020" stroke-width="1.5"/><path d="M7.5 11 V9.5 A2 2 0 0 1 11.5 9.5 V11" fill="none" stroke="#000" stroke-width="1.3"/><rect x="6.5" y="11" width="6" height="4.5" fill="#fff" stroke="#000" stroke-width="1.1"/></svg>
<div class="tx" style="left:476px;top:792px;font-size:11.7px;color:#f6f6f6;font-weight:normal;font-style:normal;">Link to Target</div>
<svg class="a" style="left:447px;top:812px;" width="19" height="19" viewBox="0 0 19 19"><rect x="0" y="0" width="19" height="19" fill="#000"/><rect x="1" y="1" width="17" height="17" fill="#38c8c8"/><rect x="2.5" y="8.5" width="2" height="2" fill="#fff" stroke="#000" stroke-width="1"/><path d="M5 9.5 H11 M9 7 L11.5 9.5 L9 12" fill="none" stroke="#000" stroke-width="1.2" /><circle cx="14.5" cy="9.5" r="2.5" fill="#fff" stroke="#ff2020" stroke-width="1.5"/></svg>
<div class="tx" style="left:476px;top:812px;font-size:11.7px;color:#f6f6f6;font-weight:normal;font-style:normal;">Move to Target</div>
<svg class="a" style="left:447px;top:832px;" width="19" height="19" viewBox="0 0 19 19"><rect x="0" y="0" width="19" height="19" fill="#000"/><rect x="1" y="1" width="17" height="17" fill="#38c8c8"/><circle cx="9.5" cy="9.5" r="7.5" fill="#ff1010"/><circle cx="9.5" cy="9.5" r="5.5" fill="#fff"/><circle cx="9.5" cy="9.5" r="4" fill="#ff1010"/><circle cx="9.5" cy="9.5" r="2" fill="#fff"/></svg>
<div class="tx" style="left:476px;top:832px;font-size:11.7px;color:#f6f6f6;font-weight:normal;font-style:normal;">Set Target</div>
<svg class="a" style="left:447px;top:852px;" width="19" height="19" viewBox="0 0 19 19"><rect x="0" y="0" width="19" height="19" fill="#000"/><rect x="1" y="1" width="17" height="17" fill="#1064d8"/><path d="M3 4 H16 V15 H3 Z" fill="#000" /><path d="M4 5 H15 V14 H4 Z" fill="#f8d800" /><text x="4.5" y="12.6" font-family="Liberation Sans" font-size="7" font-weight="bold" fill="#000">ID</text></svg>
<div class="tx" style="left:476px;top:852px;font-size:11.7px;color:#f6f6f6;font-weight:normal;font-style:normal;">Instance ID</div>
<svg class="a" style="left:447px;top:872px;" width="19" height="19" viewBox="0 0 19 19"><rect x="0" y="0" width="19" height="19" fill="#000"/><rect x="1" y="1" width="17" height="17" fill="#1064d8"/><circle cx="9.5" cy="9.5" r="6" fill="#e83040" stroke="#000"/><circle cx="8" cy="7" r="2" fill="#ffb0b0"/></svg>
<div class="tx" style="left:476px;top:872px;font-size:11.7px;color:#f6f6f6;font-weight:normal;font-style:normal;">Instance Material</div>
<svg class="a" style="left:447px;top:892px;" width="19" height="19" viewBox="0 0 19 19"><rect x="0" y="0" width="19" height="19" fill="#000"/><rect x="1" y="1" width="17" height="17" fill="#1064d8"/><path d="M3 3 H16 V16 H3 Z" fill="#000" /><path d="M4 4 H9.5 V9.5 H4 Z M9.5 9.5 H15 V15 H9.5 Z" fill="#fff" /></svg>
<div class="tx" style="left:476px;top:892px;font-size:11.7px;color:#f6f6f6;font-weight:normal;font-style:normal;">Mapping</div>
<svg class="a" style="left:447px;top:912px;" width="19" height="19" viewBox="0 0 19 19"><rect x="0" y="0" width="19" height="19" fill="#000"/><rect x="1" y="1" width="17" height="17" fill="#1064d8"/><circle cx="5.5" cy="5.5" r="3" fill="#ff8090" stroke="#000"/><circle cx="13.5" cy="5.5" r="3" fill="#40e060" stroke="#000"/><circle cx="5.5" cy="13.5" r="3" fill="#40a0ff" stroke="#000"/><circle cx="13.5" cy="13.5" r="3" fill="#f0f020" stroke="#000"/></svg>
<div class="tx" style="left:476px;top:912px;font-size:11.7px;color:#f6f6f6;font-weight:normal;font-style:normal;">Material ID</div>
<svg class="a" style="left:592px;top:752px;" width="19" height="19" viewBox="0 0 19 19"><rect x="0" y="0" width="19" height="19" fill="#000"/><rect x="1" y="1" width="17" height="17" fill="#d8d4a8"/><path d="M2 15 L6 8 L9 13 L13 4 L17 12" fill="none" stroke="#000" stroke-width="1" /><circle cx="6" cy="8" r="1.2" fill="#fff" stroke="#000" stroke-width="1"/><circle cx="9" cy="13" r="1.2" fill="#fff" stroke="#000" stroke-width="1"/><circle cx="13" cy="4" r="1.2" fill="#fff" stroke="#000" stroke-width="1"/></svg>
<div class="tx" style="left:621px;top:752px;font-size:11.7px;color:#f6f6f6;font-weight:normal;font-style:normal;">Displace</div>
<svg class="a" style="left:592px;top:772px;" width="19" height="19" viewBox="0 0 19 19"><rect x="0" y="0" width="19" height="19" fill="#000"/><rect x="1" y="1" width="17" height="17" fill="#d8d4a8"/><path d="M8 4 L10 2 H16 V8 L14 10 H8 Z" fill="#000" /><path d="M9 5 H13 V9 H9 Z" fill="#e0e0e0" /><path d="M4 16 V6 M4 16 H14" fill="none" stroke="#000" stroke-width="1.2" /><path d="M4 16 V8" fill="none" stroke="#2060ff" stroke-width="1.2" /><path d="M4 16 H12" fill="none" stroke="#ff2020" stroke-width="1.2" /><path d="M4 16 L8 12" fill="none" stroke="#20c040" stroke-width="1.2" /></svg>
<div class="tx" style="left:621px;top:772px;font-size:11.7px;color:#f6f6f6;font-weight:normal;font-style:normal;">Move Pivots</div>
<svg class="a" style="left:592px;top:792px;" width="19" height="19" viewBox="0 0 19 19"><rect x="0" y="0" width="19" height="19" fill="#000"/><rect x="1" y="1" width="17" height="17" fill="#d8d4a8"/><path d="M9.5 3 L3 15 H16 Z" fill="none" stroke="#000" stroke-width="1" stroke-dasharray="1 1"/><circle cx="9.5" cy="3" r="1.2" fill="#fff" stroke="#000" stroke-width="1"/><circle cx="3" cy="15" r="1.2" fill="#fff" stroke="#000" stroke-width="1"/><circle cx="16" cy="15" r="1.2" fill="#fff" stroke="#000" stroke-width="1"/><circle cx="9.5" cy="10" r="1.2" fill="#fff" stroke="#000" stroke-width="1"/></svg>
<div class="tx" style="left:621px;top:792px;font-size:11.7px;color:#f6f6f6;font-weight:normal;font-style:normal;">Relax</div>
<svg class="a" style="left:592px;top:812px;" width="19" height="19" viewBox="0 0 19 19"><rect x="0" y="0" width="19" height="19" fill="#000"/><rect x="1" y="1" width="17" height="17" fill="#d8d4a8"/><path d="M4 7 L7 4 L15 4 L15 12 L12 15 L4 15 Z" fill="#000" /><path d="M5 8 H11 V14 H5 Z" fill="#e8e8e8" /><path d="M6 7 L8 5 H14 L12 7 Z" fill="#c8c8c8" /><path d="M12 8 L14 6 V12 L12 14 Z" fill="#9a9a9a" /></svg>
<div class="tx" style="left:621px;top:812px;font-size:11.7px;color:#f6f6f6;font-weight:normal;font-style:normal;">Shape</div>
<svg class="a" style="left:592px;top:832px;" width="19" height="19" viewBox="0 0 19 19"><rect x="0" y="0" width="19" height="19" fill="#000"/><rect x="1" y="1" width="17" height="17" fill="#d8d4a8"/><path d="M4 7 L7 4 L15 4 L15 12 L12 15 L4 15 Z" fill="#000" /><path d="M5 8 H11 V14 H5 Z" fill="#ff9090" /><path d="M6 7 L8 5 H14 L12 7 Z" fill="#ffc0c0" /><path d="M12 8 L14 6 V12 L12 14 Z" fill="#e06060" /><path d="M5 8 L11 14 M11 8 L5 14" fill="none" stroke="#e00000" stroke-width="1.2" /></svg>
<div class="tx" style="left:621px;top:832px;font-size:11.7px;color:#f6f6f6;font-weight:normal;font-style:normal;">Shape Remove</div>
<svg class="a" style="left:592px;top:852px;" width="19" height="19" viewBox="0 0 19 19"><rect x="0" y="0" width="19" height="19" fill="#000"/><rect x="1" y="1" width="17" height="17" fill="#d8d4a8"/><path d="M4 6.5 L6.5 4 H15 V12.5 L12.5 15 H4 Z M4 6.5 H12.5 V15 M12.5 6.5 L15 4" fill="none" stroke="#000" stroke-width="1.2" /><path d="M6 8.5 H10.5 V13" fill="none" stroke="#808080" stroke-width="1" /></svg>
<div class="tx" style="left:621px;top:852px;font-size:11.7px;color:#f6f6f6;font-weight:normal;font-style:normal;">Shell</div>
<svg class="a" style="left:592px;top:872px;" width="19" height="19" viewBox="0 0 19 19"><rect x="0" y="0" width="19" height="19" fill="#000"/><rect x="1" y="1" width="17" height="17" fill="#d8d4a8"/><path d="M9.5 2.5 L2.5 16 H16.5 Z M6 9.5 H13 L9.5 16 Z" fill="none" stroke="#000" stroke-width="1.2" /><path d="M6 9.5 H13 L9.5 16 Z" fill="#fff" /></svg>
<div class="tx" style="left:621px;top:872px;font-size:11.7px;color:#f6f6f6;font-weight:normal;font-style:normal;">Subdivide</div>
<svg class="a" style="left:592px;top:892px;" width="19" height="19" viewBox="0 0 19 19"><rect x="0" y="0" width="19" height="19" fill="#000"/><rect x="1" y="1" width="17" height="17" fill="#d8d4a8"/><path d="M3 3 H16 V16 H3 Z" fill="#fff" /><path d="M3 3.5 H16 M3 7.5 H16 M3 11.5 H16 M3 15.5 H16 M6 3.5 V7.5 M11 3.5 V7.5 M8.5 7.5 V11.5 M13.5 7.5 V11.5 M6 11.5 V15.5 M11 11.5 V15.5" fill="none" stroke="#000" stroke-width="1" /></svg>
<div class="tx" style="left:621px;top:892px;font-size:11.7px;color:#f6f6f6;font-weight:normal;font-style:normal;">Brick Fracture</div>
<svg class="a" style="left:592px;top:912px;" width="19" height="19" viewBox="0 0 19 19"><rect x="0" y="0" width="19" height="19" fill="#000"/><rect x="1" y="1" width="17" height="17" fill="#d8d4a8"/><path d="M5 3 H14 L16 9.5 L14 16 H5 L3 9.5 Z" fill="#e8e8e8" /><path d="M5 3 H14 L16 9.5 L14 16 H5 L3 9.5 Z" fill="none" stroke="#000" stroke-width="1" /><circle cx="3" cy="3" r="1.3" fill="#fff" stroke="#000" stroke-width="1"/><circle cx="16" cy="3" r="1.3" fill="#fff" stroke="#000" stroke-width="1"/><circle cx="3" cy="16" r="1.3" fill="#fff" stroke="#000" stroke-width="1"/><circle cx="16" cy="16" r="1.3" fill="#fff" stroke="#000" stroke-width="1"/></svg>
<div class="tx" style="left:621px;top:912px;font-size:11.7px;color:#f6f6f6;font-weight:normal;font-style:normal;">Convex Fracture</div>
<svg class="a" style="left:737px;top:752px;" width="19" height="19" viewBox="0 0 19 19"><rect x="0" y="0" width="19" height="19" fill="#000"/><rect x="1" y="1" width="17" height="17" fill="#d8d4a8"/><path d="M2.5 2.5 H16.5 V16.5 H2.5 Z" fill="none" stroke="#000" stroke-width="1" stroke-dasharray="1 1"/><rect x="7.5" y="4.5" width="4" height="4" fill="#c8c4a0" stroke="#000" stroke-width="1"/><rect x="4.5" y="9.5" width="4" height="4" fill="#c8c4a0" stroke="#000" stroke-width="1"/><rect x="9.5" y="9.5" width="4" height="4" fill="#c8c4a0" stroke="#000" stroke-width="1"/></svg>
<div class="tx" style="left:766px;top:752px;font-size:11.7px;color:#f6f6f6;font-weight:normal;font-style:normal;">Element Attach</div>
<svg class="a" style="left:737px;top:772px;" width="19" height="19" viewBox="0 0 19 19"><rect x="0" y="0" width="19" height="19" fill="#000"/><rect x="1" y="1" width="17" height="17" fill="#d8d4a8"/><rect x="2.5" y="2.5" width="5" height="5" fill="#fff" stroke="#000" stroke-width="1"/><path d="M2 2 L8 8" fill="none" stroke="#000" stroke-width="1" /><rect x="10.5" y="3.5" width="5" height="5" fill="#fff" stroke="#000" stroke-width="1"/><path d="M10 3 L16 9" fill="none" stroke="#000" stroke-width="1" /><rect x="3.5" y="10.5" width="5" height="5" fill="#fff" stroke="#000" stroke-width="1"/><path d="M3 10 L9 16" fill="none" stroke="#000" stroke-width="1" /><rect x="11.5" y="11.5" width="5" height="5" fill="#fff" stroke="#000" stroke-width="1"/><path d="M11 11 L17 17" fill="none" stroke="#000" stroke-width="1" /></svg>
<div class="tx" style="left:766px;top:772px;font-size:11.7px;color:#f6f6f6;font-weight:normal;font-style:normal;">Element Fracture</div>
<svg class="a" style="left:737px;top:792px;" width="19" height="19" viewBox="0 0 19 19"><rect x="0" y="0" width="19" height="19" fill="#000"/><rect x="1" y="1" width="17" height="17" fill="#d8d4a8"/><path d="M3 3 H16 V16 H3 Z" fill="#fff" /><path d="M3.5 3.5 H15.5 V15.5 H3.5 Z M3.5 3.5 L15.5 15.5" fill="none" stroke="#000" stroke-width="1.2" /></svg>
<div class="tx" style="left:766px;top:792px;font-size:11.7px;color:#f6f6f6;font-weight:normal;font-style:normal;">Face Fracture</div>
<svg class="a" style="left:737px;top:812px;" width="19" height="19" viewBox="0 0 19 19"><rect x="0" y="0" width="19" height="19" fill="#000"/><rect x="1" y="1" width="17" height="17" fill="#f0a898"/><path d="M5 5 H14 V14 H5 Z" fill="none" stroke="#d02020" stroke-width="1" stroke-dasharray="1 1"/><rect x="3.5" y="3.5" width="2" height="2" fill="#fff" stroke="#000" stroke-width="1"/><rect x="8.5" y="2.5" width="2" height="2" fill="#fff" stroke="#000" stroke-width="1"/><rect x="14.5" y="3.5" width="2" height="2" fill="#fff" stroke="#000" stroke-width="1"/><rect x="2.5" y="8.5" width="2" height="2" fill="#fff" stroke="#000" stroke-width="1"/><rect x="14.5" y="8.5" width="2" height="2" fill="#fff" stroke="#000" stroke-width="1"/><rect x="3.5" y="14.5" width="2" height="2" fill="#fff" stroke="#000" stroke-width="1"/><rect x="8.5" y="14.5" width="2" height="2" fill="#fff" stroke="#000" stroke-width="1"/><rect x="14.5" y="14.5" width="2" height="2" fill="#fff" stroke="#000" stroke-width="1"/><circle cx="9.5" cy="9.5" r="2" fill="#fff" stroke="#000" stroke-width="1"/></svg>
<div class="tx" style="left:766px;top:812px;font-size:11.7px;color:#f6f6f6;font-weight:normal;font-style:normal;">Fuse</div>
<svg class="a" style="left:737px;top:832px;" width="19" height="19" viewBox="0 0 19 19"><rect x="0" y="0" width="19" height="19" fill="#000"/><rect x="1" y="1" width="17" height="17" fill="#d8d4a8"/><path d="M3 8 L7 3 L11 6 L9 10 Z M12 3 L16 4 L15 9 L12 8 Z M3 12 L8 11 L9 16 L4 16 Z M11 11 L16 12 L14 16 L10 15 Z" fill="none" stroke="#000" stroke-width="1" /><path d="M12 3 L16 4 L15 9 L12 8 Z M3 12 L8 11 L9 16 L4 16 Z" fill="#fff" /></svg>
<div class="tx" style="left:766px;top:832px;font-size:11.7px;color:#f6f6f6;font-weight:normal;font-style:normal;">Voronoi Fracture</div>
<svg class="a" style="left:737px;top:852px;" width="19" height="19" viewBox="0 0 19 19"><rect x="0" y="0" width="19" height="19" fill="#000"/><rect x="1" y="1" width="17" height="17" fill="#c848d0"/><path d="M4 14 V7 Q4 3 9 3 H11 Q15 3 15 7 V14 H12 V8 H7 V14 Z" fill="#c0c0c0" /><path d="M4 14 V7 Q4 3 9 3 H11 Q15 3 15 7 V14 H12 V8 H7 V14 Z" fill="none" stroke="#000" stroke-width="1" /><path d="M11 10 L14 16 M14 10 L11 16" fill="none" stroke="#fff" stroke-width="1" /></svg>
<div class="tx" style="left:766px;top:852px;font-size:11.7px;color:#f6f6f6;font-weight:normal;font-style:normal;">Cloth Bind</div>
<svg class="a" style="left:737px;top:872px;" width="19" height="19" viewBox="0 0 19 19"><rect x="0" y="0" width="19" height="19" fill="#000"/><rect x="1" y="1" width="17" height="17" fill="#c848d0"/><path d="M3 3 L8 8 M16 3 L11 8 M3 16 L8 11 M16 16 L11 11" fill="none" stroke="#fff" stroke-width="1" /><path d="M8 8 L5 8 L8 5 Z M11 8 L14 8 L11 5 Z M8 11 L5 11 L8 14 Z M11 11 L14 11 L11 14 Z" fill="#fff" /><circle cx="2.5" cy="2.5" r="1" fill="#fff" stroke="#000" stroke-width="1"/><circle cx="16.5" cy="2.5" r="1" fill="#fff" stroke="#000" stroke-width="1"/><circle cx="2.5" cy="16.5" r="1" fill="#fff" stroke="#000" stroke-width="1"/><circle cx="16.5" cy="16.5" r="1" fill="#fff" stroke="#000" stroke-width="1"/></svg>
<div class="tx" style="left:766px;top:872px;font-size:11.7px;color:#f6f6f6;font-weight:normal;font-style:normal;">Cloth Collect</div>
<svg class="a" style="left:737px;top:892px;" width="19" height="19" viewBox="0 0 19 19"><rect x="0" y="0" width="19" height="19" fill="#000"/><rect x="1" y="1" width="17" height="17" fill="#c848d0"/><path d="M4 13 L13 3 L16 6 L6 16 L3 16 Z" fill="#f8d040" /><path d="M4 13 L13 3 L16 6 L6 16 L3 16 Z" fill="none" stroke="#000" stroke-width="1" /><path d="M12 4 L15 7 L16 6 L13 3 Z" fill="#ff8080" /><circle cx="3" cy="17" r="1" fill="#fff" stroke="#000" stroke-width="1"/><circle cx="16" cy="17" r="1" fill="#fff" stroke="#000" stroke-width="1"/></svg>
<div class="tx" style="left:766px;top:892px;font-size:11.7px;color:#f6f6f6;font-weight:normal;font-style:normal;">Modify Bindings</div>
<svg class="a" style="left:737px;top:912px;" width="19" height="19" viewBox="0 0 19 19"><rect x="0" y="0" width="19" height="19" fill="#000"/><rect x="1" y="1" width="17" height="17" fill="#c848d0"/><path d="M3.5 3.5 H15.5 V15.5 H3.5 Z" fill="none" stroke="#c8b868" stroke-width="1" stroke-dasharray="1 1"/><circle cx="3.5" cy="3.5" r="1.6" fill="#fff" stroke="#000" stroke-width="1"/><circle cx="15.5" cy="3.5" r="1.6" fill="#fff" stroke="#000" stroke-width="1"/><circle cx="3.5" cy="15.5" r="1.6" fill="#fff" stroke="#000" stroke-width="1"/><circle cx="15.5" cy="15.5" r="1.6" fill="#fff" stroke="#000" stroke-width="1"/><path d="M7.5 9.5 V8.0 A2 2 0 0 1 11.5 8.0 V9.5" fill="none" stroke="#000" stroke-width="1.3"/><rect x="6.5" y="9.5" width="6" height="4.5" fill="#fff" stroke="#000" stroke-width="1.1"/></svg>
<div class="tx" style="left:766px;top:912px;font-size:11.7px;color:#f6f6f6;font-weight:normal;font-style:normal;">Particle Bind</div>
<svg class="a" style="left:882px;top:752px;" width="19" height="19" viewBox="0 0 19 19"><rect x="0" y="0" width="19" height="19" fill="#000"/><rect x="1" y="1" width="17" height="17" fill="#c848d0"/><path d="M3.5 3.5 H15.5 V15.5 H3.5 Z" fill="none" stroke="#c8b868" stroke-width="1" stroke-dasharray="1 1"/><circle cx="3.5" cy="3.5" r="1.6" fill="#fff" stroke="#000" stroke-width="1"/><circle cx="15.5" cy="3.5" r="1.6" fill="#fff" stroke="#000" stroke-width="1"/><circle cx="3.5" cy="15.5" r="1.6" fill="#fff" stroke="#000" stroke-width="1"/><circle cx="15.5" cy="15.5" r="1.6" fill="#fff" stroke="#000" stroke-width="1"/><path d="M7.5 9.5 V8.0 A2 2 0 0 1 11.5 8.0 V9.5" fill="none" stroke="#000" stroke-width="1.3"/><rect x="6.5" y="9.5" width="6" height="4.5" fill="#ff4040" stroke="#000" stroke-width="1.1"/></svg>
<div class="tx" style="left:911px;top:752px;font-size:11.7px;color:#f6f6f6;font-weight:normal;font-style:normal;">Particle Break</div>
<svg class="a" style="left:882px;top:772px;" width="19" height="19" viewBox="0 0 19 19"><rect x="0" y="0" width="19" height="19" fill="#000"/><rect x="1" y="1" width="17" height="17" fill="#c848d0"/><circle cx="6" cy="6" r="3.5" fill="none" stroke="#fff" stroke-width="1.2"/><circle cx="13" cy="9.5" r="3.5" fill="none" stroke="#fff" stroke-width="1.2"/><circle cx="6" cy="13" r="3.5" fill="none" stroke="#fff" stroke-width="1.2"/></svg>
<div class="tx" style="left:911px;top:772px;font-size:11.7px;color:#f6f6f6;font-weight:normal;font-style:normal;">Particle Physics</div>
<svg class="a" style="left:882px;top:792px;" width="19" height="19" viewBox="0 0 19 19"><rect x="0" y="0" width="19" height="19" fill="#000"/><rect x="1" y="1" width="17" height="17" fill="#c848d0"/><rect x="3.5" y="3" width="12" height="5.5" rx="2.75" fill="#e4e4e4" stroke="#000" stroke-width="1.2"/><rect x="3.5" y="10.5" width="12" height="5.5" rx="2.75" fill="#e4e4e4" stroke="#000" stroke-width="1.2"/><ellipse cx="7" cy="5.75" rx="2.2" ry="1.6" fill="#000"/><ellipse cx="12" cy="13.25" rx="2.2" ry="1.6" fill="#000"/></svg>
<div class="tx" style="left:911px;top:792px;font-size:11.7px;color:#f6f6f6;font-weight:normal;font-style:normal;">Particle Switch</div>
<svg class="a" style="left:882px;top:812px;" width="19" height="19" viewBox="0 0 19 19"><rect x="0" y="0" width="19" height="19" fill="#000"/><rect x="1" y="1" width="17" height="17" fill="#c848d0"/><path d="M3 10 L9 16 L16 5 L12 2 L9 9 L6 6 Z" fill="#e8d8f0" /><path d="M3 10 L9 16 L16 5" fill="none" stroke="#000" stroke-width="1.2" /><path d="M4 10 L9 15 L10 13 Z" fill="#40c8f0" /></svg>
<div class="tx" style="left:911px;top:812px;font-size:11.7px;color:#f6f6f6;font-weight:normal;font-style:normal;">Wobble</div>
<svg class="a" style="left:882px;top:832px;" width="19" height="19" viewBox="0 0 19 19"><rect x="0" y="0" width="19" height="19" fill="#000"/><rect x="1" y="1" width="17" height="17" fill="#6040c0"/><path d="M3.5 3.5 H15.5 V15.5 H3.5 Z" fill="none" stroke="#c8b868" stroke-width="1" stroke-dasharray="1 1"/><circle cx="3.5" cy="3.5" r="1.6" fill="#fff" stroke="#000" stroke-width="1"/><circle cx="15.5" cy="3.5" r="1.6" fill="#fff" stroke="#000" stroke-width="1"/><circle cx="3.5" cy="15.5" r="1.6" fill="#fff" stroke="#000" stroke-width="1"/><circle cx="15.5" cy="15.5" r="1.6" fill="#fff" stroke="#000" stroke-width="1"/><path d="M7.5 9.5 V8.0 A2 2 0 0 1 11.5 8.0 V9.5" fill="none" stroke="#000" stroke-width="1.3"/><rect x="6.5" y="9.5" width="6" height="4.5" fill="#fff" stroke="#000" stroke-width="1.1"/></svg>
<div class="tx" style="left:911px;top:832px;font-size:11.7px;color:#f6f6f6;font-weight:normal;font-style:normal;">PhysX Bind</div>
<svg class="a" style="left:882px;top:852px;" width="19" height="19" viewBox="0 0 19 19"><rect x="0" y="0" width="19" height="19" fill="#000"/><rect x="1" y="1" width="17" height="17" fill="#6040c0"/><path d="M3.5 3.5 H15.5 V15.5 H3.5 Z" fill="none" stroke="#c8b868" stroke-width="1" stroke-dasharray="1 1"/><circle cx="3.5" cy="3.5" r="1.6" fill="#fff" stroke="#000" stroke-width="1"/><circle cx="15.5" cy="3.5" r="1.6" fill="#fff" stroke="#000" stroke-width="1"/><circle cx="3.5" cy="15.5" r="1.6" fill="#fff" stroke="#000" stroke-width="1"/><circle cx="15.5" cy="15.5" r="1.6" fill="#fff" stroke="#000" stroke-width="1"/><path d="M7.5 9.5 V8.0 A2 2 0 0 1 11.5 8.0 V9.5" fill="none" stroke="#000" stroke-width="1.3"/><rect x="6.5" y="9.5" width="6" height="4.5" fill="#ff4040" stroke="#000" stroke-width="1.1"/></svg>
<div class="tx" style="left:911px;top:852px;font-size:11.7px;color:#f6f6f6;font-weight:normal;font-style:normal;">PhysX Break</div>
<svg class="a" style="left:882px;top:872px;" width="19" height="19" viewBox="0 0 19 19"><rect x="0" y="0" width="19" height="19" fill="#000"/><rect x="1" y="1" width="17" height="17" fill="#9058e8"/><path d="M1 17 V14 Q9.5 10 18 14 V17 Z" fill="#9058e8" /><path d="M1 14 Q9.5 10 18 14" fill="none" stroke="#000" stroke-width="1" /><path d="M3 8 L8 13 L13 7" fill="none" stroke="#1a90ff" stroke-width="2" /><circle cx="14" cy="6" r="1.8" fill="#fff" stroke="#000" stroke-width="1"/></svg>
<div class="tx" style="left:911px;top:872px;font-size:11.7px;color:#f6f6f6;font-weight:normal;font-style:normal;">PhysX Collision</div>
<svg class="a" style="left:882px;top:892px;" width="19" height="19" viewBox="0 0 19 19"><rect x="0" y="0" width="19" height="19" fill="#000"/><rect x="1" y="1" width="17" height="17" fill="#a878f8"/><path d="M3 6 L6 3 H16 V13 L13 16 H3 Z" fill="#000" /><path d="M4 6.5 L6.5 4 H15 V12.5 L12.5 15 H4 Z" fill="#fff" /><path d="M5 8 H12 V14 H5 Z" fill="#7a7a7a" /><path d="M12 8 L14 6 V12 L12 14 Z" fill="#c8c8c8" /></svg>
<div class="tx" style="left:911px;top:892px;font-size:11.7px;color:#f6f6f6;font-weight:normal;font-style:normal;">PhysX Shape</div>
<svg class="a" style="left:882px;top:912px;" width="19" height="19" viewBox="0 0 19 19"><rect x="0" y="0" width="19" height="19" fill="#000"/><rect x="1" y="1" width="17" height="17" fill="#a070f0"/><rect x="3.5" y="3" width="12" height="5.5" rx="2.75" fill="#e4e4e4" stroke="#000" stroke-width="1.2"/><rect x="3.5" y="10.5" width="12" height="5.5" rx="2.75" fill="#e4e4e4" stroke="#000" stroke-width="1.2"/><ellipse cx="7" cy="5.75" rx="2.2" ry="1.6" fill="#000"/><ellipse cx="12" cy="13.25" rx="2.2" ry="1.6" fill="#000"/></svg>
<div class="tx" style="left:911px;top:912px;font-size:11.7px;color:#f6f6f6;font-weight:normal;font-style:normal;">PhysX Switch</div>
<svg class="a" style="left:1027px;top:752px;" width="19" height="19" viewBox="0 0 19 19"><rect x="0" y="0" width="19" height="19" fill="#000"/><rect x="1" y="1" width="17" height="17" fill="#d0d0ff"/><path d="M8 1.5 H11 V5 H8 Z" fill="#000" /><path d="M8.7 2.2 H10.3 V4.3 H8.7 Z" fill="#fff" /><path d="M6.5 5.5 H12.5 V11 H6.5 Z" fill="#000" /><path d="M7.3 6.2 H11.7 V10.3 H7.3 Z" fill="#3878c8" /><path d="M6.8 7 L3.8 10.5" fill="none" stroke="#000" stroke-width="1.8" /><path d="M6.8 7 L3.8 10.5" fill="none" stroke="#30d030" stroke-width="0.8" /><path d="M12.2 7 L15.2 10.5" fill="none" stroke="#000" stroke-width="1.8" /><path d="M12.2 7 L15.2 10.5" fill="none" stroke="#3080e0" stroke-width="0.8" /><path d="M7.3 10.5 H9.2 V16.5 H7.3 Z" fill="#000" /><path d="M9.8 10.5 H11.7 V16.5 H9.8 Z" fill="#000" /><path d="M7.8 11 H8.7 V16 H7.8 Z" fill="#30c030" /><path d="M10.3 11 H11.2 V16 H10.3 Z" fill="#3070e0" /></svg>
<div class="tx" style="left:1056px;top:752px;font-size:11.7px;color:#f6f6f6;font-weight:normal;font-style:normal;">Actor</div>
<svg class="a" style="left:1027px;top:772px;" width="19" height="19" viewBox="0 0 19 19"><rect x="0" y="0" width="19" height="19" fill="#000"/><rect x="1" y="1" width="17" height="17" fill="#c8c8f8"/><path d="M3 2 H16 V17 H3 Z" fill="#000" /><path d="M5 4 H14 V15 H5 Z" fill="#fff" /><path d="M3.5 3h1v1h-1zM3.5 6h1v1h-1zM3.5 9h1v1h-1zM3.5 12h1v1h-1zM3.5 15h1v1h-1zM14.5 3h1v1h-1zM14.5 6h1v1h-1zM14.5 9h1v1h-1zM14.5 12h1v1h-1zM14.5 15h1v1h-1z" fill="#fff" /><path d="M8 6 H11 V12 H8 Z" fill="#000" /></svg>
<div class="tx" style="left:1056px;top:772px;font-size:11.7px;color:#f6f6f6;font-weight:normal;font-style:normal;">Actor Animation</div>
<svg class="a" style="left:1027px;top:792px;" width="19" height="19" viewBox="0 0 19 19"><rect x="0" y="0" width="19" height="19" fill="#000"/><rect x="1" y="1" width="17" height="17" fill="#c8c8f8"/><path d="M9.5 2 V17 M3 9.5 H16" fill="none" stroke="#000" stroke-width="1" /><circle cx="9.5" cy="4" r="1.5" fill="#30a8a8" stroke="#000" stroke-width="1"/><path d="M7 7 H12 V12 H7 Z" fill="#38b0a8" /><path d="M4 13 H6 V17 H4 Z M13 13 H15 V17 H13 Z" fill="#2060d0" /><path d="M3 3 L6 6 M16 3 L13 6" fill="none" stroke="#208040" stroke-width="1" /></svg>
<div class="tx" style="left:1056px;top:792px;font-size:11.7px;color:#f6f6f6;font-weight:normal;font-style:normal;">Actor Center</div>
<svg class="a" style="left:1027px;top:812px;" width="19" height="19" viewBox="0 0 19 19"><rect x="0" y="0" width="19" height="19" fill="#000"/><rect x="1" y="1" width="17" height="17" fill="#c8c8f8"/><circle cx="9.5" cy="3.5" r="1.5" fill="#30a8a8" stroke="#000" stroke-width="1"/><path d="M6 6 H13 V11 H6 Z" fill="#38b0a8" /><path d="M6 6 H13 V11 H6 Z M3 8 H6 M13 8 H16 M9.5 11 V16" fill="none" stroke="#000" stroke-width="1" /><path d="M3 12 H5 V16 H3 Z M14 12 H16 V16 H14 Z" fill="#2060d0" /><path d="M7.5 14 L9.5 17 L11.5 14 Z" fill="#000" /></svg>
<div class="tx" style="left:1056px;top:812px;font-size:11.7px;color:#f6f6f6;font-weight:normal;font-style:normal;">Actor Collect</div>
<svg class="a" style="left:1027px;top:832px;" width="19" height="19" viewBox="0 0 19 19"><rect x="0" y="0" width="19" height="19" fill="#000"/><rect x="1" y="1" width="17" height="17" fill="#f08828"/><path d="M4 4 L15 7 L8 15 Z" fill="#e8d0a0" /><path d="M4 4 L15 7 L8 15 Z" fill="none" stroke="#000" stroke-width="1" /><circle cx="15" cy="7" r="1.3" fill="#fff" stroke="#000" stroke-width="1"/><circle cx="8" cy="15" r="1.3" fill="#fff" stroke="#000" stroke-width="1"/><circle cx="4" cy="4" r="1.3" fill="#fff" stroke="#000" stroke-width="1"/></svg>
<div class="tx" style="left:1056px;top:832px;font-size:11.7px;color:#f6f6f6;font-weight:normal;font-style:normal;">Mesh</div>
<svg class="a" style="left:1027px;top:852px;" width="19" height="19" viewBox="0 0 19 19"><rect x="0" y="0" width="19" height="19" fill="#000"/><rect x="1" y="1" width="17" height="17" fill="#f08828"/><path d="M13 3 H7 Q3 3 3 6.5 Q3 9.5 7 9.5 H12 Q16 9.5 16 12.5 Q16 16 12 16 H4" fill="none" stroke="#fff" stroke-width="1.5" stroke-dasharray="1.5 1"/><circle cx="13" cy="3" r="1.2" fill="#fff" stroke="#000" stroke-width="1"/><circle cx="4" cy="16" r="1.2" fill="#fff" stroke="#000" stroke-width="1"/></svg>
<div class="tx" style="left:1056px;top:852px;font-size:11.7px;color:#f6f6f6;font-weight:normal;font-style:normal;">Spline Paths</div>
<svg class="a" style="left:1027px;top:872px;" width="19" height="19" viewBox="0 0 19 19"><rect x="0" y="0" width="19" height="19" fill="#000"/><rect x="1" y="1" width="17" height="17" fill="#f8e060"/><path d="M1 17 V14 Q9.5 10 18 14 V17 Z" fill="#c8a040" /><path d="M1 14 Q9.5 10 18 14" fill="none" stroke="#000" stroke-width="1" /><path d="M3 8 L8 13 L13 7" fill="none" stroke="#2090ff" stroke-width="2" /><circle cx="14" cy="6" r="1.8" fill="#fff" stroke="#000" stroke-width="1"/></svg>
<div class="tx" style="left:1056px;top:872px;font-size:11.7px;color:#f6f6f6;font-weight:normal;font-style:normal;">Collision</div>
<svg class="a" style="left:1027px;top:892px;" width="19" height="19" viewBox="0 0 19 19"><rect x="0" y="0" width="19" height="19" fill="#000"/><rect x="1" y="1" width="17" height="17" fill="#f8e060"/><circle cx="6" cy="12" r="3.5" fill="#fff" stroke="#000" stroke-width="1.3"/><circle cx="13" cy="12" r="3.5" fill="#fff" stroke="#000" stroke-width="1.3"/><path d="M3 11 L5 3 H8 L9 9 H10 L11 3 H14 L16 11 Z" fill="#000" /><path d="M5 11h2v2h-2zM12 11h2v2h-2z" fill="#000" /></svg>
<div class="tx" style="left:1056px;top:892px;font-size:11.7px;color:#f6f6f6;font-weight:normal;font-style:normal;">Find Target</div>
<svg class="a" style="left:1027px;top:912px;" width="19" height="19" viewBox="0 0 19 19"><rect x="0" y="0" width="19" height="19" fill="#000"/><rect x="1" y="1" width="17" height="17" fill="#f8e060"/><path d="M4.5 3.5 H15.5 V14.5" fill="none" stroke="#000" stroke-width="1" stroke-dasharray="1 1"/><path d="M4 15 V5 M4 15 H14" fill="none" stroke="#2060ff" stroke-width="1.3" /><path d="M4 15 H14" fill="none" stroke="#ff2020" stroke-width="1.3" /><path d="M2 6 L4 3 L6 6 Z" fill="#2060ff" /><path d="M13 13 L16 15 L13 17 Z" fill="#ff2020" /><circle cx="4" cy="15" r="1.2" fill="#20c040" stroke="#000" stroke-width="1"/></svg>
<div class="tx" style="left:1056px;top:912px;font-size:11.7px;color:#f6f6f6;font-weight:normal;font-style:normal;">Object Test</div>
<svg class="a" style="left:1172px;top:752px;" width="19" height="19" viewBox="0 0 19 19"><rect x="0" y="0" width="19" height="19" fill="#000"/><rect x="1" y="1" width="17" height="17" fill="#f8e870"/><path d="M3.5 3.5 H15.5 V15.5 H3.5 Z" fill="none" stroke="#000" stroke-width="1" stroke-dasharray="2 1"/><circle cx="9.5" cy="9.5" r="3" fill="#fff" stroke="#000" stroke-width="1.3"/></svg>
<div class="tx" style="left:1201px;top:752px;font-size:11.7px;color:#f6f6f6;font-weight:normal;font-style:normal;">Property Test</div>
<svg class="a" style="left:1172px;top:772px;" width="19" height="19" viewBox="0 0 19 19"><rect x="0" y="0" width="19" height="19" fill="#000"/><rect x="1" y="1" width="17" height="17" fill="#f8e870"/><path d="M2 6 H9 V2 L17 9.5 L9 17 V13 H2 Z" fill="#000" /><path d="M3 7 H10 V4.5 L15.5 9.5 L10 14.5 V12 H3 Z" fill="#40a8ff" /></svg>
<div class="tx" style="left:1201px;top:772px;font-size:11.7px;color:#f6f6f6;font-weight:normal;font-style:normal;">Send Out</div>
<svg class="a" style="left:1172px;top:792px;" width="19" height="19" viewBox="0 0 19 19"><rect x="0" y="0" width="19" height="19" fill="#000"/><rect x="1" y="1" width="17" height="17" fill="#f8e870"/><circle cx="9.5" cy="4.5" r="2.5" fill="#fff" stroke="#000" stroke-width="1.2"/><path d="M9.5 7 V10 L4 15 M9.5 10 L15 15" fill="none" stroke="#000" stroke-width="1.2" /><path d="M3 12 V16 H7 M16 12 V16 H12" fill="none" stroke="#000" stroke-width="1.2" /></svg>
<div class="tx" style="left:1201px;top:792px;font-size:11.7px;color:#f6f6f6;font-weight:normal;font-style:normal;">Split</div>
<svg class="a" style="left:1172px;top:812px;" width="19" height="19" viewBox="0 0 19 19"><rect x="0" y="0" width="19" height="19" fill="#000"/><rect x="1" y="1" width="17" height="17" fill="#f8e870"/><path d="M1 17 V14 Q9.5 6 18 14 V17 Z" fill="#40a8ff" /><path d="M1 14 Q9.5 6 18 14" fill="none" stroke="#000" stroke-width="1" /><rect x="3.5" y="2.5" width="2" height="2" fill="#fff" stroke="#000" stroke-width="1"/><rect x="8.5" y="2.5" width="2" height="2" fill="#fff" stroke="#000" stroke-width="1"/><rect x="13.5" y="2.5" width="2" height="2" fill="#fff" stroke="#000" stroke-width="1"/><path d="M4.5 6 V10 M9.5 6 V8 M14.5 6 V10" fill="none" stroke="#000" stroke-width="1" stroke-dasharray="1 1"/></svg>
<div class="tx" style="left:1201px;top:812px;font-size:11.7px;color:#f6f6f6;font-weight:normal;font-style:normal;">Surface Test</div>
<svg class="a" style="left:1172px;top:832px;" width="19" height="19" viewBox="0 0 19 19"><rect x="0" y="0" width="19" height="19" fill="#000"/><rect x="1" y="1" width="17" height="17" fill="#f8e870"/><circle cx="9.5" cy="9.5" r="7" fill="#fff" stroke="#000" stroke-width="1.5"/><path d="M9.5 4.5 V10 H13" fill="none" stroke="#000" stroke-width="1.5" /></svg>
<div class="tx" style="left:1201px;top:832px;font-size:11.7px;color:#f6f6f6;font-weight:normal;font-style:normal;">Time Test</div>
<svg class="a" style="left:1172px;top:852px;" width="19" height="19" viewBox="0 0 19 19"><rect x="0" y="0" width="19" height="19" fill="#000"/><rect x="1" y="1" width="17" height="17" fill="#209a9a"/><path d="M2 9.5 L8 4 M2 9.5 L8 15" fill="none" stroke="#fff" stroke-width="1" stroke-dasharray="1 1"/><path d="M8 7 H15 V13 H8 Z" fill="#000" /><path d="M9 8 H14 V12 H9 Z" fill="#fff" /><path d="M15 8 L17 7 V13 L15 12 Z" fill="#000" /><circle cx="10" cy="5.5" r="1.5" fill="#fff" stroke="#000"/><circle cx="13" cy="5.5" r="1.5" fill="#fff" stroke="#000"/></svg>
<div class="tx" style="left:1201px;top:852px;font-size:11.7px;color:#f6f6f6;font-weight:normal;font-style:normal;">Camera Cull</div>
<svg class="a" style="left:1172px;top:872px;" width="19" height="19" viewBox="0 0 19 19"><rect x="0" y="0" width="19" height="19" fill="#000"/><rect x="1" y="1" width="8" height="8" fill="#38c8c8"/><rect x="10" y="1" width="8" height="8" fill="#38c8c8"/><rect x="1" y="10" width="8" height="8" fill="#38c8c8"/><rect x="10" y="10" width="8" height="8" fill="#ffffff"/><rect x="11" y="11" width="6" height="6" fill="#38c8c8"/><path d="M12 12h1v1h-1zM15 11h1v1h-1zM14 13h1v1h-1zM16 14h1v1h-1zM12 14h1v1h-1zM13 16h1v1h-1zM15 15h1v1h-1z" fill="#000" /></svg>
<div class="tx" style="left:1201px;top:872px;font-size:11.7px;color:#f6f6f6;font-weight:normal;font-style:normal;">Display</div>
<svg class="a" style="left:1172px;top:892px;" width="19" height="19" viewBox="0 0 19 19"><rect x="0" y="0" width="19" height="19" fill="#000"/><rect x="1" y="1" width="17" height="17" fill="#30b8b8"/><text x="1.8" y="8.6" font-family="Liberation Sans" font-size="5.6" font-weight="bold" fill="#000">10101</text><text x="3.2" y="16" font-family="Liberation Sans" font-size="5.6" font-weight="bold" fill="#000">1010</text></svg>
<div class="tx" style="left:1201px;top:892px;font-size:11.7px;color:#f6f6f6;font-weight:normal;font-style:normal;">Display Data</div>
<svg class="a" style="left:1172px;top:912px;" width="19" height="19" viewBox="0 0 19 19"><rect x="0" y="0" width="19" height="19" fill="#000"/><rect x="1" y="1" width="17" height="17" fill="#38c8c8"/><path d="M3 2 H16 V17 H3 Z" fill="#000" /><path d="M4 3 H15 V16 H4 Z" fill="#fff" /><path d="M5 5.5 H14 M5 8.5 H14 M5 11.5 H14 M5 14.5 H14 M9.5 5.5 V14.5" fill="none" stroke="#000" stroke-width="1" /></svg>
<div class="tx" style="left:1201px;top:912px;font-size:11.7px;color:#f6f6f6;font-weight:normal;font-style:normal;">Notes</div>
<svg class="a" style="left:1317px;top:752px;" width="19" height="19" viewBox="0 0 19 19"><rect x="0" y="0" width="19" height="19" fill="#000"/><rect x="1" y="1" width="17" height="17" fill="#4a4ab8"/><circle cx="8.5" cy="4" r="1.6" fill="#fff" stroke="#000" stroke-width="1"/><circle cx="4.5" cy="7.2" r="1.6" fill="#fff" stroke="#000" stroke-width="1"/><circle cx="4.5" cy="11.8" r="1.6" fill="#fff" stroke="#000" stroke-width="1"/><circle cx="8.5" cy="15" r="1.6" fill="#fff" stroke="#000" stroke-width="1"/><path d="M7.5 8.3 H12.5 V5.5 L17 9.5 L12.5 13.5 V10.7 H7.5 Z" fill="#000" /><path d="M8 8.8 H13 V6.8 L16 9.5 L13 12.2 V10.2 H8 Z" fill="#10ff10" /></svg>
<div class="tx" style="left:1346px;top:752px;font-size:11.7px;color:#f6f6f6;font-weight:normal;font-style:normal;">Export Particles</div>
<svg class="a" style="left:1317px;top:772px;" width="19" height="19" viewBox="0 0 19 19"><rect x="0" y="0" width="19" height="19" fill="#000"/><rect x="1" y="1" width="17" height="17" fill="#d080d8"/><path d="M1 9.5 H18" fill="none" stroke="#000" stroke-width="1" /><path d="M9.5 2 L13 6 H11 V9 H8 V6 H6 Z" fill="#40e040" /><path d="M9.5 2 L13 6 H11 V9 H8 V6 H6 Z" fill="none" stroke="#000" stroke-width="0.8" /><path d="M9.5 17 L13 13 H11 V10 H8 V13 H6 Z" fill="#ff3030" /><path d="M9.5 17 L13 13 H11 V10 H8 V13 H6 Z" fill="none" stroke="#000" stroke-width="0.8" /></svg>
<div class="tx" style="left:1346px;top:772px;font-size:11.7px;color:#f6f6f6;font-weight:normal;font-style:normal;">Baseline</div>
<div class="a" style="left:1px;top:932px;width:1498px;height:2px;background:#cccccc;"></div>
<div class="a" style="left:1px;top:934px;width:1498px;height:17px;background:#f0f0f0;"></div>
<div class="a" style="left:1px;top:934px;width:1498px;height:1px;background:#ffffff;"></div>
<div class="a" style="left:262px;top:934px;width:1221px;height:17px;background:#cdcdcd;"></div>
<svg class="a" style="left:5px;top:938px;" width="8" height="10" viewBox="0 0 8 10"><path d="M6 1 L2 5 L6 9" fill="none" stroke="#505050" stroke-width="2.2"/></svg>
<svg class="a" style="left:1487px;top:938px;" width="8" height="10" viewBox="0 0 8 10"><path d="M2 1 L6 5 L2 9" fill="none" stroke="#505050" stroke-width="2.2"/></svg>
<div class="a" style="left:1498px;top:37px;width:245px;height:914px;background:#c8c8c8;"></div>
<div class="a" style="left:1500px;top:37px;width:1px;height:914px;background:#d2d2d2;"></div>
<div class="a" style="left:1501px;top:37px;width:236px;height:160px;background:#bebebe;border-radius:3px;box-shadow:inset 0 0 0 1px #c6c6c6"></div>
<svg class="a" style="left:1507px;top:45px;" width="6" height="4" viewBox="0 0 6 4"><path d="M0 0 H6 L3 4 Z" fill="#767676"/></svg>
<svg class="a" style="left:1721px;top:44px;" width="5" height="5" viewBox="0 0 5 5"><path d="M0 0h1v1h-1zM2 0h1v1h-1zM4 0h1v1h-1zM0 2h1v1h-1zM2 2h1v1h-1zM4 2h1v1h-1zM0 4h1v1h-1zM2 4h1v1h-1zM4 4h1v1h-1z" fill="#7a7a7a"/></svg>
<div class="tx" style="left:1520px;top:38px;font-size:11.9px;color:#3a3a3a;font-weight:bold;font-style:normal;">Export Type</div>
<div class="a" style="left:1508px;top:66px;width:237px;height:124px;background:transparent;border:1px solid #cbcbcb;border-radius:3px"></div>
<div class="a" style="left:1511px;top:64px;width:64px;height:4px;background:#bebebe;"></div>
<div class="tx" style="left:1513px;top:57px;font-size:10.8px;color:#333;font-weight:normal;font-style:normal;">Export type</div>
<div class="a" style="left:1516px;top:80px;width:11px;height:11px;background:#adadad;border-radius:6px;box-shadow:0 0 0 1px #c4c4c4"></div>
<div class="tx" style="left:1534px;top:77px;font-size:10.8px;color:#333;font-weight:normal;font-style:normal;">Objects</div>
<div class="a" style="left:1516px;top:98px;width:11px;height:11px;background:#adadad;border-radius:6px;box-shadow:0 0 0 1px #c4c4c4"></div>
<div class="tx" style="left:1534px;top:95px;font-size:10.8px;color:#333;font-weight:normal;font-style:normal;">PRT</div>
<div class="a" style="left:1516px;top:116px;width:11px;height:11px;background:#adadad;border-radius:6px;box-shadow:0 0 0 1px #c4c4c4"></div>
<div class="a" style="left:1518px;top:118px;width:7px;height:7px;background:#3a3a3a;border-radius:4px"></div>
<div class="tx" style="left:1534px;top:113px;font-size:10.8px;color:#333;font-weight:normal;font-style:normal;">tyCache</div>
<div class="a" style="left:1516px;top:134px;width:11px;height:11px;background:#adadad;border-radius:6px;box-shadow:0 0 0 1px #c4c4c4"></div>
<div class="tx" style="left:1534px;top:131px;font-size:10.8px;color:#333;font-weight:normal;font-style:normal;">Alembic Point Cloud</div>
<div class="a" style="left:1516px;top:152px;width:11px;height:11px;background:#adadad;border-radius:6px;box-shadow:0 0 0 1px #c4c4c4"></div>
<div class="tx" style="left:1534px;top:149px;font-size:10.8px;color:#333;font-weight:normal;font-style:normal;">Alembic Mesh</div>
<div class="a" style="left:1516px;top:170px;width:11px;height:11px;background:#adadad;border-radius:6px;box-shadow:0 0 0 1px #c4c4c4"></div>
<div class="tx" style="left:1534px;top:167px;font-size:10.8px;color:#333;font-weight:normal;font-style:normal;">VRay Proxy</div>
<div class="a" style="left:1501px;top:200px;width:236px;height:100px;background:#bebebe;border-radius:3px;box-shadow:inset 0 0 0 1px #c6c6c6"></div>
<svg class="a" style="left:1507px;top:208px;" width="6" height="4" viewBox="0 0 6 4"><path d="M0 0 H6 L3 4 Z" fill="#767676"/></svg>
<svg class="a" style="left:1721px;top:207px;" width="5" height="5" viewBox="0 0 5 5"><path d="M0 0h1v1h-1zM2 0h1v1h-1zM4 0h1v1h-1zM0 2h1v1h-1zM2 2h1v1h-1zM4 2h1v1h-1zM0 4h1v1h-1zM2 4h1v1h-1zM4 4h1v1h-1z" fill="#7a7a7a"/></svg>
<div class="tx" style="left:1520px;top:201px;font-size:11.9px;color:#3a3a3a;font-weight:bold;font-style:normal;">Frame Range</div>
<div class="a" style="left:1508px;top:226px;width:237px;height:66px;background:transparent;border:1px solid #cbcbcb;border-radius:3px"></div>
<div class="a" style="left:1511px;top:224px;width:68px;height:4px;background:#bebebe;"></div>
<div class="tx" style="left:1513px;top:217px;font-size:10.8px;color:#333;font-weight:normal;font-style:normal;">Frame range</div>
<div class="a" style="left:1516px;top:240px;width:89px;height:16px;background:#adadad;box-shadow:0 0 0 1px #c6c6c6"></div>
<div class="tx" style="left:1519px;top:238px;font-size:10.8px;color:#333;font-weight:normal;font-style:normal;">1001</div>
<svg class="a" style="left:1596px;top:244px;" width="6" height="9" viewBox="0 0 6 9"><path d="M0 3.5 L3 0 L6 3.5 Z M0 5.5 L3 9 L6 5.5 Z" fill="#333"/></svg>
<div class="a" style="left:1638px;top:240px;width:89px;height:16px;background:#adadad;box-shadow:0 0 0 1px #c6c6c6"></div>
<div class="tx" style="left:1641px;top:238px;font-size:10.8px;color:#333;font-weight:normal;font-style:normal;">1200</div>
<svg class="a" style="left:1718px;top:244px;" width="6" height="9" viewBox="0 0 6 9"><path d="M0 3.5 L3 0 L6 3.5 Z M0 5.5 L3 9 L6 5.5 Z" fill="#333"/></svg>
<div class="tx" style="left:1618px;top:238px;font-size:10.8px;color:#333;font-weight:normal;font-style:normal;">to</div>
<div class="a" style="left:1515px;top:262px;width:216px;height:21px;background:#a9a9a9;border-radius:3px;box-shadow:0 0 0 1px #c2c2c2"></div>
<div class="tx" style="left:1515px;top:263px;width:216px;text-align:center;font-size:10.8px;color:#333">Set To Timeline</div>
<div class="a" style="left:1501px;top:304px;width:236px;height:18px;background:#bebebe;border-radius:3px;box-shadow:inset 0 0 0 1px #c6c6c6"></div>
<svg class="a" style="left:1508px;top:310px;" width="5" height="6" viewBox="0 0 5 6"><path d="M0 0 V6 L4 3 Z" fill="#767676"/></svg>
<svg class="a" style="left:1731px;top:309px;" width="5" height="5" viewBox="0 0 5 5"><path d="M0 0h1v1h-1zM2 0h1v1h-1zM4 0h1v1h-1zM0 2h1v1h-1zM2 2h1v1h-1zM4 2h1v1h-1zM0 4h1v1h-1zM2 4h1v1h-1zM4 4h1v1h-1z" fill="#7a7a7a"/></svg>
<div class="tx" style="left:1520px;top:304px;font-size:11.9px;color:#3a3a3a;font-weight:bold;font-style:normal;">General Settings</div>
<div class="a" style="left:1501px;top:326px;width:236px;height:18px;background:#bebebe;border-radius:3px;box-shadow:inset 0 0 0 1px #c6c6c6"></div>
<svg class="a" style="left:1508px;top:332px;" width="5" height="6" viewBox="0 0 5 6"><path d="M0 0 V6 L4 3 Z" fill="#767676"/></svg>
<svg class="a" style="left:1731px;top:331px;" width="5" height="5" viewBox="0 0 5 5"><path d="M0 0h1v1h-1zM2 0h1v1h-1zM4 0h1v1h-1zM0 2h1v1h-1zM2 2h1v1h-1zM4 2h1v1h-1zM0 4h1v1h-1zM2 4h1v1h-1zM4 4h1v1h-1z" fill="#7a7a7a"/></svg>
<div class="tx" style="left:1520px;top:326px;font-size:11.9px;color:#3a3a3a;font-weight:bold;font-style:normal;">Geometry Settings</div>
<div class="a" style="left:1501px;top:348px;width:236px;height:496px;background:#bebebe;border-radius:3px;box-shadow:inset 0 0 0 1px #c6c6c6"></div>
<svg class="a" style="left:1507px;top:355px;" width="6" height="4" viewBox="0 0 6 4"><path d="M0 0 H6 L3 4 Z" fill="#767676"/></svg>
<svg class="a" style="left:1721px;top:354px;" width="5" height="5" viewBox="0 0 5 5"><path d="M0 0h1v1h-1zM2 0h1v1h-1zM4 0h1v1h-1zM0 2h1v1h-1zM2 2h1v1h-1zM4 2h1v1h-1zM0 4h1v1h-1zM2 4h1v1h-1zM4 4h1v1h-1z" fill="#7a7a7a"/></svg>
<div class="tx" style="left:1520px;top:348px;font-size:11.9px;color:#3a3a3a;font-weight:bold;font-style:normal;">tyCache Settings</div>
<div class="a" style="left:1508px;top:376px;width:237px;height:42px;background:transparent;border:1px solid #cbcbcb;border-radius:3px"></div>
<div class="a" style="left:1511px;top:374px;width:40px;height:4px;background:#bebebe;"></div>
<div class="tx" style="left:1513px;top:367px;font-size:10.8px;color:#333;font-weight:normal;font-style:normal;">Output</div>
<div class="a" style="left:1515px;top:388px;width:192px;height:23px;background:#cdcdcd;border:2px solid #fbfbfb;box-shadow:0 0 0 1px #8c8c8c"></div>
<div class="tx" style="left:1519px;top:389px;width:186px;overflow:hidden;font-size:10.8px;color:#333">Y:\AlexDev\_projects\plasticBottles\3dsmax</div>
<div class="a" style="left:1710px;top:388px;width:21px;height:22px;background:#a9a9a9;border-radius:3px;box-shadow:0 0 0 1px #c2c2c2"></div>
<div class="tx" style="left:1714px;top:389px;font-size:10.8px;color:#333;font-weight:normal;font-style:normal;">...</div>
<div class="a" style="left:1508px;top:427px;width:237px;height:229px;background:transparent;border:1px solid #cbcbcb;border-radius:3px"></div>
<div class="a" style="left:1511px;top:425px;width:56px;height:4px;background:#bebebe;"></div>
<div class="tx" style="left:1513px;top:418px;font-size:10.8px;color:#333;font-weight:normal;font-style:normal;">Channels</div>
<div class="a" style="left:1554px;top:441px;width:11px;height:11px;background:#bebebe;box-shadow:inset 0 0 0 1px #c8c8c8"></div>
<div class="tx" style="left:1567px;top:438px;font-size:10.8px;color:#8e8e8e;font-weight:normal;font-style:normal;">ID</div>
<div class="tx" style="left:1631px;top:437px;font-size:10.8px;color:#333;font-weight:normal;font-style:normal;">int64</div>
<div class="a" style="left:1554px;top:459px;width:11px;height:11px;background:#bebebe;box-shadow:inset 0 0 0 1px #c8c8c8"></div>
<div class="tx" style="left:1567px;top:456px;font-size:10.8px;color:#8e8e8e;font-weight:normal;font-style:normal;">Flags</div>
<div class="tx" style="left:1631px;top:455px;font-size:10.8px;color:#333;font-weight:normal;font-style:normal;">int8</div>
<div class="a" style="left:1554px;top:477px;width:11px;height:11px;background:#adadad;box-shadow:0 0 0 1px #c6c6c6"></div>
<svg class="a" style="left:1555px;top:478px;" width="10" height="9" viewBox="0 0 10 9"><path d="M1 4.2 L2.8 3.4 L4 5.2 L8.6 0.8 L9.4 1.8 L4 8 Z" fill="#2c2c2c"/></svg>
<div class="tx" style="left:1567px;top:474px;font-size:10.8px;color:#333;font-weight:normal;font-style:normal;">Groups</div>
<div class="tx" style="left:1631px;top:472px;font-size:10.8px;color:#333;font-weight:normal;font-style:normal;">int32</div>
<div class="a" style="left:1554px;top:494px;width:11px;height:11px;background:#adadad;box-shadow:0 0 0 1px #c6c6c6"></div>
<svg class="a" style="left:1555px;top:495px;" width="10" height="9" viewBox="0 0 10 9"><path d="M1 4.2 L2.8 3.4 L4 5.2 L8.6 0.8 L9.4 1.8 L4 8 Z" fill="#2c2c2c"/></svg>
<div class="tx" style="left:1567px;top:491px;font-size:10.8px;color:#333;font-weight:normal;font-style:normal;">Position</div>
<div class="tx" style="left:1629px;top:489px;font-size:10.8px;color:#333;font-weight:normal;font-style:normal;">float32[3]</div>
<div class="a" style="left:1554px;top:512px;width:11px;height:11px;background:#adadad;box-shadow:0 0 0 1px #c6c6c6"></div>
<svg class="a" style="left:1555px;top:513px;" width="10" height="9" viewBox="0 0 10 9"><path d="M1 4.2 L2.8 3.4 L4 5.2 L8.6 0.8 L9.4 1.8 L4 8 Z" fill="#2c2c2c"/></svg>
<div class="tx" style="left:1567px;top:509px;font-size:10.8px;color:#333;font-weight:normal;font-style:normal;">Rotation</div>
<div class="tx" style="left:1629px;top:507px;font-size:10.8px;color:#333;font-weight:normal;font-style:normal;">float32[4]</div>
<div class="a" style="left:1554px;top:530px;width:11px;height:11px;background:#adadad;box-shadow:0 0 0 1px #c6c6c6"></div>
<svg class="a" style="left:1555px;top:531px;" width="10" height="9" viewBox="0 0 10 9"><path d="M1 4.2 L2.8 3.4 L4 5.2 L8.6 0.8 L9.4 1.8 L4 8 Z" fill="#2c2c2c"/></svg>
<div class="tx" style="left:1567px;top:527px;font-size:10.8px;color:#333;font-weight:normal;font-style:normal;">Scale</div>
<div class="tx" style="left:1629px;top:525px;font-size:10.8px;color:#333;font-weight:normal;font-style:normal;">float32[3]</div>
<div class="a" style="left:1554px;top:548px;width:11px;height:11px;background:#adadad;box-shadow:0 0 0 1px #c6c6c6"></div>
<svg class="a" style="left:1555px;top:549px;" width="10" height="9" viewBox="0 0 10 9"><path d="M1 4.2 L2.8 3.4 L4 5.2 L8.6 0.8 L9.4 1.8 L4 8 Z" fill="#2c2c2c"/></svg>
<div class="tx" style="left:1567px;top:545px;font-size:10.8px;color:#333;font-weight:normal;font-style:normal;">Velocity</div>
<div class="tx" style="left:1629px;top:543px;font-size:10.8px;color:#333;font-weight:normal;font-style:normal;">float32[3]</div>
<div class="a" style="left:1554px;top:566px;width:11px;height:11px;background:#adadad;box-shadow:0 0 0 1px #c6c6c6"></div>
<div class="tx" style="left:1567px;top:563px;font-size:10.8px;color:#333;font-weight:normal;font-style:normal;">Spin</div>
<div class="tx" style="left:1629px;top:561px;font-size:10.8px;color:#333;font-weight:normal;font-style:normal;">float32[3]</div>
<div class="a" style="left:1554px;top:583px;width:11px;height:11px;background:#adadad;box-shadow:0 0 0 1px #c6c6c6"></div>
<svg class="a" style="left:1555px;top:584px;" width="10" height="9" viewBox="0 0 10 9"><path d="M1 4.2 L2.8 3.4 L4 5.2 L8.6 0.8 L9.4 1.8 L4 8 Z" fill="#2c2c2c"/></svg>
<div class="tx" style="left:1567px;top:580px;font-size:10.8px;color:#333;font-weight:normal;font-style:normal;">Shape</div>
<div class="tx" style="left:1631px;top:578px;font-size:10.8px;color:#333;font-weight:normal;font-style:normal;">int32</div>
<div class="a" style="left:1554px;top:601px;width:11px;height:11px;background:#adadad;box-shadow:0 0 0 1px #c6c6c6"></div>
<svg class="a" style="left:1555px;top:602px;" width="10" height="9" viewBox="0 0 10 9"><path d="M1 4.2 L2.8 3.4 L4 5.2 L8.6 0.8 L9.4 1.8 L4 8 Z" fill="#2c2c2c"/></svg>
<div class="tx" style="left:1567px;top:598px;font-size:10.8px;color:#333;font-weight:normal;font-style:normal;">MatID</div>
<div class="tx" style="left:1631px;top:596px;font-size:10.8px;color:#333;font-weight:normal;font-style:normal;">int16</div>
<div class="a" style="left:1554px;top:619px;width:11px;height:11px;background:#adadad;box-shadow:0 0 0 1px #c6c6c6"></div>
<svg class="a" style="left:1555px;top:620px;" width="10" height="9" viewBox="0 0 10 9"><path d="M1 4.2 L2.8 3.4 L4 5.2 L8.6 0.8 L9.4 1.8 L4 8 Z" fill="#2c2c2c"/></svg>
<div class="tx" style="left:1567px;top:616px;font-size:10.8px;color:#333;font-weight:normal;font-style:normal;">Mapping</div>
<div class="tx" style="left:1629px;top:614px;font-size:10.8px;color:#333;font-weight:normal;font-style:normal;">float32[3]x</div>
<div class="a" style="left:1554px;top:637px;width:11px;height:11px;background:#adadad;box-shadow:0 0 0 1px #c6c6c6"></div>
<svg class="a" style="left:1555px;top:638px;" width="10" height="9" viewBox="0 0 10 9"><path d="M1 4.2 L2.8 3.4 L4 5.2 L8.6 0.8 L9.4 1.8 L4 8 Z" fill="#2c2c2c"/></svg>
<div class="tx" style="left:1567px;top:634px;font-size:10.8px;color:#333;font-weight:normal;font-style:normal;">Materials</div>
<div class="tx" style="left:1629px;top:632px;font-size:10.8px;color:#333;font-weight:normal;font-style:normal;">.mat file</div>
<div class="a" style="left:1508px;top:666px;width:237px;height:56px;background:transparent;border:1px solid #cbcbcb;border-radius:3px"></div>
<div class="a" style="left:1511px;top:664px;width:42px;height:4px;background:#bebebe;"></div>
<div class="tx" style="left:1513px;top:657px;font-size:10.8px;color:#333;font-weight:normal;font-style:normal;">Export</div>
<div class="a" style="left:1515px;top:677px;width:216px;height:21px;background:#a9a9a9;border-radius:3px;box-shadow:0 0 0 1px #c2c2c2"></div>
<div class="tx" style="left:1515px;top:678px;width:216px;text-align:center;font-size:10.8px;color:#333">Generate tyCache files</div>
<div class="a" style="left:1516px;top:704px;width:216px;height:8px;background:#e6e6e6;"></div>
<div class="a" style="left:1508px;top:731px;width:237px;height:105px;background:transparent;border:1px solid #cbcbcb;border-radius:3px"></div>
<div class="a" style="left:1511px;top:729px;width:98px;height:4px;background:#bebebe;"></div>
<div class="tx" style="left:1513px;top:723px;font-size:10.8px;color:#333;font-weight:normal;font-style:normal;">Post-export action</div>
<div class="a" style="left:1516px;top:745px;width:11px;height:11px;background:#adadad;box-shadow:0 0 0 1px #c6c6c6"></div>
<svg class="a" style="left:1517px;top:746px;" width="10" height="9" viewBox="0 0 10 9"><path d="M1 4.2 L2.8 3.4 L4 5.2 L8.6 0.8 L9.4 1.8 L4 8 Z" fill="#2c2c2c"/></svg>
<div class="tx" style="left:1529px;top:741px;font-size:10.8px;color:#333;font-weight:normal;font-style:normal;">Create tyCache object</div>
<div class="a" style="left:1530px;top:765px;width:11px;height:11px;background:#adadad;box-shadow:0 0 0 1px #c6c6c6"></div>
<svg class="a" style="left:1531px;top:766px;" width="10" height="9" viewBox="0 0 10 9"><path d="M1 4.2 L2.8 3.4 L4 5.2 L8.6 0.8 L9.4 1.8 L4 8 Z" fill="#2c2c2c"/></svg>
<div class="tx" style="left:1543px;top:761px;font-size:10.8px;color:#333;font-weight:normal;font-style:normal;">Only if not already created</div>
<div class="a" style="left:1514px;top:787px;width:218px;height:43px;background:transparent;border:1px solid #cbcbcb;border-radius:3px"></div>
<div class="a" style="left:1517px;top:785px;width:68px;height:4px;background:#bebebe;"></div>
<div class="tx" style="left:1519px;top:778px;font-size:10.8px;color:#333;font-weight:normal;font-style:normal;">Export Layer</div>
<div class="a" style="left:1520px;top:801px;width:176px;height:23px;background:#c8c8c8;border:2px solid #fbfbfb;box-shadow:0 0 0 1px #8c8c8c"></div>
<div class="tx" style="left:1526px;top:801px;font-size:10.8px;color:#333;font-weight:normal;font-style:normal;">$(tyFlowLayer)</div>
<div class="a" style="left:1699px;top:802px;width:25px;height:21px;background:#a9a9a9;border-radius:3px;box-shadow:0 0 0 1px #c2c2c2"></div>
<div class="tx" style="left:1705px;top:801px;font-size:10.8px;color:#333;font-weight:normal;font-style:normal;">...</div>
<div class="a" style="left:1501px;top:848px;width:236px;height:18px;background:#bebebe;border-radius:3px;box-shadow:inset 0 0 0 1px #c6c6c6"></div>
<svg class="a" style="left:1508px;top:854px;" width="5" height="6" viewBox="0 0 5 6"><path d="M0 0 V6 L4 3 Z" fill="#767676"/></svg>
<svg class="a" style="left:1731px;top:853px;" width="5" height="5" viewBox="0 0 5 5"><path d="M0 0h1v1h-1zM2 0h1v1h-1zM4 0h1v1h-1zM0 2h1v1h-1zM2 2h1v1h-1zM4 2h1v1h-1zM0 4h1v1h-1zM2 4h1v1h-1zM4 4h1v1h-1z" fill="#7a7a7a"/></svg>
<div class="tx" style="left:1520px;top:848px;font-size:11.9px;color:#3a3a3a;font-weight:bold;font-style:normal;">Deadline</div>
<div class="a" style="left:1735px;top:37px;width:8px;height:914px;background:#c0c0c0;"></div>
<div class="a" style="left:1735px;top:37px;width:1px;height:914px;background:#cdcdcd;"></div>
<div class="a" style="left:1734px;top:37px;width:1px;height:20px;background:#d4d4d4;"></div>
<div class="a" style="left:1744px;top:0px;width:11px;height:30px;background:linear-gradient(#ffffff,#f2f2f2);"></div>
<div class="a" style="left:1744px;top:30px;width:11px;height:2px;background:#555555;"></div>
<div class="a" style="left:1744px;top:32px;width:11px;height:925px;background:linear-gradient(90deg,#9c9c9c,#b4b4b4 50%,#c4c4c4 60%,#b0b0b0 80%,#f0f0f0 100%);"></div>
</body></html>
